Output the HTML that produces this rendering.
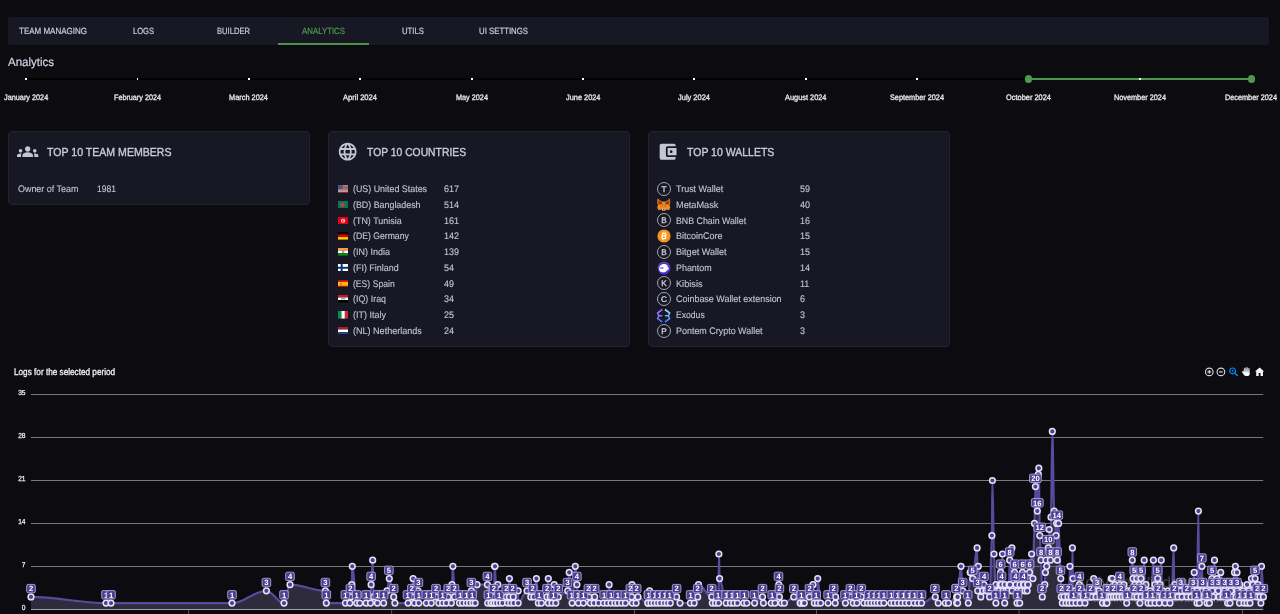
<!DOCTYPE html>
<html><head><meta charset="utf-8"><title>Analytics</title>
<style>
html,body{margin:0;padding:0;background:#0b0b10;}
body{width:1280px;height:614px;overflow:hidden;position:relative;font-family:"Liberation Sans",sans-serif;}
#root{position:absolute;left:0;top:0;width:1280px;height:614px;will-change:transform;text-rendering:geometricPrecision;}
.t{position:absolute;white-space:nowrap;line-height:1;transform-origin:0 0;}
</style></head><body><div id="root">
<div style="position:absolute;left:8px;top:17.3px;width:1260.8px;height:27.7px;background:#181825;border-radius:2px"></div>
<span class="t" style="left:19.00px;top:26.80px;font-size:9.0px;color:#cdcdda;transform:scaleX(0.8888);-webkit-text-stroke:0.2px #cdcdda;">TEAM MANAGING</span>
<span class="t" style="left:133.00px;top:26.80px;font-size:9.0px;color:#cdcdda;transform:scaleX(0.8397);-webkit-text-stroke:0.2px #cdcdda;">LOGS</span>
<span class="t" style="left:217.00px;top:26.80px;font-size:9.0px;color:#cdcdda;transform:scaleX(0.8459);-webkit-text-stroke:0.2px #cdcdda;">BUILDER</span>
<span class="t" style="left:302.00px;top:26.80px;font-size:9.0px;color:#4c9a50;transform:scaleX(0.8714);-webkit-text-stroke:0.2px #4c9a50;">ANALYTICS</span>
<span class="t" style="left:402.00px;top:26.80px;font-size:9.0px;color:#cdcdda;transform:scaleX(0.8625);-webkit-text-stroke:0.2px #cdcdda;">UTILS</span>
<span class="t" style="left:479.00px;top:26.80px;font-size:9.0px;color:#cdcdda;transform:scaleX(0.8672);-webkit-text-stroke:0.2px #cdcdda;">UI SETTINGS</span>
<div style="position:absolute;left:278px;top:43px;width:91px;height:2px;background:#4c9049"></div>
<span class="t" style="left:8.20px;top:56.30px;font-size:12px;color:#d4d4e2;transform:scaleX(0.9580);-webkit-text-stroke:0.2px #d4d4e2;">Analytics</span>
<div style="position:absolute;left:25px;top:78px;width:1227px;height:2px;background:#000"></div>
<div style="position:absolute;left:1028.4px;top:78px;width:222.7px;height:2px;background:#4c9a50"></div>
<div style="position:absolute;left:25.4px;top:78.1px;width:1.8px;height:1.8px;background:#fff"></div>
<span class="t" style="left:4.15px;top:93.85px;font-size:7.9px;color:#e6e6ee;transform:scaleX(0.9253);-webkit-text-stroke:0.32px #e6e6ee;">January 2024</span>
<div style="position:absolute;left:136.7px;top:78.1px;width:1.8px;height:1.8px;background:#fff"></div>
<span class="t" style="left:114.14px;top:93.85px;font-size:7.9px;color:#e6e6ee;transform:scaleX(0.9147);-webkit-text-stroke:0.32px #e6e6ee;">February 2024</span>
<div style="position:absolute;left:248.1px;top:78.1px;width:1.8px;height:1.8px;background:#fff"></div>
<span class="t" style="left:229.48px;top:93.85px;font-size:7.9px;color:#e6e6ee;transform:scaleX(0.9348);-webkit-text-stroke:0.32px #e6e6ee;">March 2024</span>
<div style="position:absolute;left:359.4px;top:78.1px;width:1.8px;height:1.8px;background:#fff"></div>
<span class="t" style="left:343.32px;top:93.85px;font-size:7.9px;color:#e6e6ee;transform:scaleX(0.9557);-webkit-text-stroke:0.32px #e6e6ee;">April 2024</span>
<div style="position:absolute;left:470.8px;top:78.1px;width:1.8px;height:1.8px;background:#fff"></div>
<span class="t" style="left:455.66px;top:93.85px;font-size:7.9px;color:#e6e6ee;transform:scaleX(0.9223);-webkit-text-stroke:0.32px #e6e6ee;">May 2024</span>
<div style="position:absolute;left:582.1px;top:78.1px;width:1.8px;height:1.8px;background:#fff"></div>
<span class="t" style="left:565.75px;top:93.85px;font-size:7.9px;color:#e6e6ee;transform:scaleX(0.9349);-webkit-text-stroke:0.32px #e6e6ee;">June 2024</span>
<div style="position:absolute;left:693.4px;top:78.1px;width:1.8px;height:1.8px;background:#fff"></div>
<span class="t" style="left:678.34px;top:93.85px;font-size:7.9px;color:#e6e6ee;transform:scaleX(0.9462);-webkit-text-stroke:0.32px #e6e6ee;">July 2024</span>
<div style="position:absolute;left:804.8px;top:78.1px;width:1.8px;height:1.8px;background:#fff"></div>
<span class="t" style="left:784.93px;top:93.85px;font-size:7.9px;color:#e6e6ee;transform:scaleX(0.9354);-webkit-text-stroke:0.32px #e6e6ee;">August 2024</span>
<div style="position:absolute;left:916.1px;top:78.1px;width:1.8px;height:1.8px;background:#fff"></div>
<span class="t" style="left:890.02px;top:93.85px;font-size:7.9px;color:#e6e6ee;transform:scaleX(0.9244);-webkit-text-stroke:0.32px #e6e6ee;">September 2024</span>
<div style="position:absolute;left:1027.5px;top:78.1px;width:1.8px;height:1.8px;background:#fff"></div>
<span class="t" style="left:1005.86px;top:93.85px;font-size:7.9px;color:#e6e6ee;transform:scaleX(0.9400);-webkit-text-stroke:0.32px #e6e6ee;">October 2024</span>
<div style="position:absolute;left:1138.8px;top:78.1px;width:1.8px;height:1.8px;background:#fff"></div>
<span class="t" style="left:1113.70px;top:93.85px;font-size:7.9px;color:#e6e6ee;transform:scaleX(0.9251);-webkit-text-stroke:0.32px #e6e6ee;">November 2024</span>
<div style="position:absolute;left:1250.1px;top:78.1px;width:1.8px;height:1.8px;background:#fff"></div>
<span class="t" style="left:1225.04px;top:93.85px;font-size:7.9px;color:#e6e6ee;transform:scaleX(0.9251);-webkit-text-stroke:0.32px #e6e6ee;">December 2024</span>
<div style="position:absolute;left:1024.9px;top:75.1px;width:7.6px;height:7.6px;border-radius:50%;background:#4c9a50"></div>
<div style="position:absolute;left:1247.5px;top:75.1px;width:7.6px;height:7.6px;border-radius:50%;background:#4c9a50"></div>
<div style="position:absolute;left:8px;top:131px;width:300px;height:72px;background:#181825;border:1px solid #232333;border-radius:4px"></div>
<div style="position:absolute;left:327.5px;top:131px;width:300px;height:214px;background:#181825;border:1px solid #232333;border-radius:4px"></div>
<div style="position:absolute;left:647.5px;top:131px;width:300px;height:214px;background:#181825;border:1px solid #232333;border-radius:4px"></div>
<span class="t" style="left:47.40px;top:146.50px;font-size:11.6px;color:#cdcdda;transform:scaleX(0.9117);-webkit-text-stroke:0.35px #cdcdda;">TOP 10 TEAM MEMBERS</span>
<span class="t" style="left:367.10px;top:146.50px;font-size:11.6px;color:#cdcdda;transform:scaleX(0.8921);-webkit-text-stroke:0.35px #cdcdda;">TOP 10 COUNTRIES</span>
<span class="t" style="left:687.10px;top:146.50px;font-size:11.6px;color:#cdcdda;transform:scaleX(0.9057);-webkit-text-stroke:0.35px #cdcdda;">TOP 10 WALLETS</span>
<svg style="position:absolute;left:17.3px;top:140.7px" width="21.33" height="21.33" viewBox="0 0 24 24"><path d="M12 12.75c1.63 0 3.07.39 4.24.9 1.08.48 1.76 1.56 1.76 2.73V18H6v-1.61c0-1.18.68-2.26 1.76-2.73 1.17-.52 2.61-.91 4.24-.91zM4 13c1.1 0 2-.9 2-2s-.9-2-2-2-2 .9-2 2 .9 2 2 2zm1.13 1.1c-.37-.06-.74-.1-1.13-.1-.99 0-1.93.21-2.78.58C.48 14.9 0 15.62 0 16.43V18h4.5v-1.61c0-.83.23-1.61.63-2.29zM20 13c1.1 0 2-.9 2-2s-.9-2-2-2-2 .9-2 2 .9 2 2 2zm4 3.43c0-.81-.48-1.53-1.22-1.85-.85-.37-1.79-.58-2.78-.58-.39 0-.76.04-1.13.1.4.68.63 1.46.63 2.29V18H24v-1.57zM12 6c1.66 0 3 1.34 3 3s-1.34 3-3 3-3-1.34-3-3 1.34-3 3-3z" fill="#c6c6d2"/></svg>
<svg style="position:absolute;left:337.4px;top:140.7px" width="21.33" height="21.33" viewBox="0 0 24 24"><path d="M11.99 2C6.47 2 2 6.48 2 12s4.47 10 9.99 10C17.52 22 22 17.52 22 12S17.52 2 11.99 2zm6.93 6h-2.95c-.32-1.25-.78-2.45-1.38-3.56 1.84.63 3.37 1.91 4.33 3.56zM12 4.04c.83 1.2 1.48 2.53 1.91 3.96h-3.82c.43-1.43 1.08-2.76 1.91-3.96zM4.26 14C4.1 13.36 4 12.69 4 12s.1-1.36.26-2h3.38c-.08.66-.14 1.32-.14 2 0 .68.06 1.34.14 2H4.26zm.82 2h2.95c.32 1.25.78 2.45 1.38 3.56-1.84-.63-3.37-1.9-4.33-3.56zm2.95-8H5.08c.96-1.66 2.49-2.93 4.33-3.56C8.81 5.55 8.35 6.75 8.03 8zM12 19.96c-.83-1.2-1.48-2.53-1.91-3.96h3.82c-.43 1.43-1.08 2.76-1.91 3.96zM14.34 14H9.66c-.09-.66-.16-1.32-.16-2 0-.68.07-1.35.16-2h4.68c.09.65.16 1.32.16 2 0 .68-.07 1.34-.16 2zm.25 5.56c.6-1.11 1.06-2.31 1.38-3.56h2.95c-.96 1.65-2.49 2.93-4.33 3.56zM16.36 14c.08-.66.14-1.32.14-2 0-.68-.06-1.34-.14-2h3.38c.16.64.26 1.31.26 2s-.1 1.36-.26 2h-3.38z" fill="#c6c6d2"/></svg>
<svg style="position:absolute;left:657.3px;top:140.7px" width="21.33" height="21.33" viewBox="0 0 24 24"><path d="M21 18v1c0 1.1-.9 2-2 2H5c-1.11 0-2-.9-2-2V5c0-1.1.89-2 2-2h14c1.1 0 2 .9 2 2v1h-9c-1.11 0-2 .9-2 2v8c0 1.1.89 2 2 2h9zm-9-2h10V8H12v8zm4-2.5c-.83 0-1.5-.67-1.5-1.5s.67-1.5 1.5-1.5 1.5.67 1.5 1.5-.67 1.5-1.5 1.5z" fill="#c6c6d2"/></svg>
<span class="t" style="left:17.60px;top:185.05px;font-size:9.5px;color:#c4c4d2;transform:scaleX(0.9402);-webkit-text-stroke:0.12px #c4c4d2;">Owner of Team</span>
<span class="t" style="left:96.50px;top:185.05px;font-size:9.5px;color:#c4c4d2;transform:scaleX(0.8943);-webkit-text-stroke:0.12px #c4c4d2;">1981</span>
<span class="t" style="left:352.90px;top:185.05px;font-size:9.5px;color:#c4c4d2;transform:scaleX(0.9344);-webkit-text-stroke:0.12px #c4c4d2;">(US) United States</span>
<span class="t" style="left:444.20px;top:185.05px;font-size:9.5px;color:#c4c4d2;transform:scaleX(0.9463);-webkit-text-stroke:0.12px #c4c4d2;">617</span>
<svg style="position:absolute;left:337.8px;top:185.0px" width="10.3" height="7.6" viewBox="0 0 20 15" preserveAspectRatio="none"><rect y="0.000" width="20" height="1.154" fill="#c9444f"/><rect y="1.154" width="20" height="1.154" fill="#f4f1f3"/><rect y="2.308" width="20" height="1.154" fill="#c9444f"/><rect y="3.462" width="20" height="1.154" fill="#f4f1f3"/><rect y="4.615" width="20" height="1.154" fill="#c9444f"/><rect y="5.769" width="20" height="1.154" fill="#f4f1f3"/><rect y="6.923" width="20" height="1.154" fill="#c9444f"/><rect y="8.077" width="20" height="1.154" fill="#f4f1f3"/><rect y="9.231" width="20" height="1.154" fill="#c9444f"/><rect y="10.385" width="20" height="1.154" fill="#f4f1f3"/><rect y="11.538" width="20" height="1.154" fill="#c9444f"/><rect y="12.692" width="20" height="1.154" fill="#f4f1f3"/><rect y="13.846" width="20" height="1.154" fill="#c9444f"/><rect width="9" height="8.1" fill="#4a5788"/></svg>
<span class="t" style="left:352.90px;top:201.05px;font-size:9.5px;color:#c4c4d2;transform:scaleX(0.9330);-webkit-text-stroke:0.12px #c4c4d2;">(BD) Bangladesh</span>
<span class="t" style="left:444.20px;top:201.05px;font-size:9.5px;color:#c4c4d2;transform:scaleX(0.9463);-webkit-text-stroke:0.12px #c4c4d2;">514</span>
<svg style="position:absolute;left:337.8px;top:200.8px" width="10.3" height="7.6" viewBox="0 0 20 15" preserveAspectRatio="none"><rect width="20" height="15" fill="#007a55"/><circle cx="8.8" cy="7.5" r="4.2" fill="#ee2a43"/></svg>
<span class="t" style="left:352.90px;top:217.05px;font-size:9.5px;color:#c4c4d2;transform:scaleX(0.9394);-webkit-text-stroke:0.12px #c4c4d2;">(TN) Tunisia</span>
<span class="t" style="left:444.20px;top:217.05px;font-size:9.5px;color:#c4c4d2;transform:scaleX(0.9463);-webkit-text-stroke:0.12px #c4c4d2;">161</span>
<svg style="position:absolute;left:337.8px;top:216.5px" width="10.3" height="7.6" viewBox="0 0 20 15" preserveAspectRatio="none"><rect width="20" height="15" fill="#e70013"/><circle cx="10" cy="7.5" r="4" fill="#fff"/><circle cx="10.3" cy="7.5" r="2.7" fill="#e70013"/><circle cx="11.3" cy="7.5" r="2.1" fill="#fff"/><circle cx="11.4" cy="7.5" r="1.1" fill="#e70013"/></svg>
<span class="t" style="left:352.90px;top:232.05px;font-size:9.5px;color:#c4c4d2;transform:scaleX(0.9113);-webkit-text-stroke:0.12px #c4c4d2;">(DE) Germany</span>
<span class="t" style="left:444.20px;top:232.05px;font-size:9.5px;color:#c4c4d2;transform:scaleX(0.9463);-webkit-text-stroke:0.12px #c4c4d2;">142</span>
<svg style="position:absolute;left:337.8px;top:232.2px" width="10.3" height="7.6" viewBox="0 0 20 15" preserveAspectRatio="none"><rect width="20" height="5" fill="#000"/><rect y="5" width="20" height="5" fill="#dd0000"/><rect y="10" width="20" height="5" fill="#ffce00"/></svg>
<span class="t" style="left:352.90px;top:248.05px;font-size:9.5px;color:#c4c4d2;transform:scaleX(0.9445);-webkit-text-stroke:0.12px #c4c4d2;">(IN) India</span>
<span class="t" style="left:444.20px;top:248.05px;font-size:9.5px;color:#c4c4d2;transform:scaleX(0.9463);-webkit-text-stroke:0.12px #c4c4d2;">139</span>
<svg style="position:absolute;left:337.8px;top:248.0px" width="10.3" height="7.6" viewBox="0 0 20 15" preserveAspectRatio="none"><rect width="20" height="5" fill="#ff9933"/><rect y="5" width="20" height="5" fill="#fff"/><rect y="10" width="20" height="5" fill="#138808"/><circle cx="10" cy="7.5" r="2" fill="none" stroke="#28308c" stroke-width="0.9"/><circle cx="10" cy="7.5" r="0.8" fill="#28308c"/></svg>
<span class="t" style="left:352.90px;top:264.05px;font-size:9.5px;color:#c4c4d2;transform:scaleX(0.9389);-webkit-text-stroke:0.12px #c4c4d2;">(FI) Finland</span>
<span class="t" style="left:444.20px;top:264.05px;font-size:9.5px;color:#c4c4d2;transform:scaleX(0.9463);-webkit-text-stroke:0.12px #c4c4d2;">54</span>
<svg style="position:absolute;left:337.8px;top:263.8px" width="10.3" height="7.6" viewBox="0 0 20 15" preserveAspectRatio="none"><rect width="20" height="15" fill="#fff"/><rect x="5.2" width="3.8" height="15" fill="#003580"/><rect y="5.6" width="20" height="3.8" fill="#003580"/></svg>
<span class="t" style="left:352.90px;top:280.05px;font-size:9.5px;color:#c4c4d2;transform:scaleX(0.9077);-webkit-text-stroke:0.12px #c4c4d2;">(ES) Spain</span>
<span class="t" style="left:444.20px;top:280.05px;font-size:9.5px;color:#c4c4d2;transform:scaleX(0.9463);-webkit-text-stroke:0.12px #c4c4d2;">49</span>
<svg style="position:absolute;left:337.8px;top:279.5px" width="10.3" height="7.6" viewBox="0 0 20 15" preserveAspectRatio="none"><rect width="20" height="15" fill="#c60b1e"/><rect y="3.75" width="20" height="7.5" fill="#ffc400"/><rect x="4.3" y="5.3" width="3" height="4" rx="0.8" fill="#b5652a"/></svg>
<span class="t" style="left:352.90px;top:295.05px;font-size:9.5px;color:#c4c4d2;transform:scaleX(0.9331);-webkit-text-stroke:0.12px #c4c4d2;">(IQ) Iraq</span>
<span class="t" style="left:444.20px;top:295.05px;font-size:9.5px;color:#c4c4d2;transform:scaleX(0.9463);-webkit-text-stroke:0.12px #c4c4d2;">34</span>
<svg style="position:absolute;left:337.8px;top:295.2px" width="10.3" height="7.6" viewBox="0 0 20 15" preserveAspectRatio="none"><rect width="20" height="5" fill="#ce1126"/><rect y="5" width="20" height="5" fill="#fff"/><rect y="10" width="20" height="5" fill="#000"/><rect x="6" y="6.6" width="8" height="1.8" fill="#2a8a4a"/></svg>
<span class="t" style="left:352.90px;top:311.05px;font-size:9.5px;color:#c4c4d2;transform:scaleX(0.9474);-webkit-text-stroke:0.12px #c4c4d2;">(IT) Italy</span>
<span class="t" style="left:444.20px;top:311.05px;font-size:9.5px;color:#c4c4d2;transform:scaleX(0.9463);-webkit-text-stroke:0.12px #c4c4d2;">25</span>
<svg style="position:absolute;left:337.8px;top:311.0px" width="10.3" height="7.6" viewBox="0 0 20 15" preserveAspectRatio="none"><rect width="6.67" height="15" fill="#009246"/><rect x="6.67" width="6.67" height="15" fill="#fff"/><rect x="13.33" width="6.67" height="15" fill="#ce2b37"/></svg>
<span class="t" style="left:352.90px;top:327.05px;font-size:9.5px;color:#c4c4d2;transform:scaleX(0.9511);-webkit-text-stroke:0.12px #c4c4d2;">(NL) Netherlands</span>
<span class="t" style="left:444.20px;top:327.05px;font-size:9.5px;color:#c4c4d2;transform:scaleX(0.9463);-webkit-text-stroke:0.12px #c4c4d2;">24</span>
<svg style="position:absolute;left:337.8px;top:326.8px" width="10.3" height="7.6" viewBox="0 0 20 15" preserveAspectRatio="none"><rect width="20" height="5" fill="#ae1c28"/><rect y="5" width="20" height="5" fill="#fff"/><rect y="10" width="20" height="5" fill="#21468b"/></svg>
<span class="t" style="left:675.80px;top:185.05px;font-size:9.5px;color:#c4c4d2;transform:scaleX(0.9446);-webkit-text-stroke:0.12px #c4c4d2;">Trust Wallet</span>
<span class="t" style="left:799.70px;top:185.05px;font-size:9.5px;color:#c4c4d2;transform:scaleX(0.9463);-webkit-text-stroke:0.12px #c4c4d2;">59</span>
<svg style="position:absolute;left:656px;top:180.8px" width="16" height="16" viewBox="-8 -8 16 16"><circle r="6.5" fill="none" stroke="#b4b4c2" stroke-width="0.9"/><text x="0" y="2.95" text-anchor="middle" font-family="Liberation Sans, sans-serif" font-size="8.2" fill="#d0d0dc" stroke="#d0d0dc" stroke-width="0.3">T</text></svg>
<span class="t" style="left:675.80px;top:201.05px;font-size:9.5px;color:#c4c4d2;transform:scaleX(0.9676);-webkit-text-stroke:0.12px #c4c4d2;">MetaMask</span>
<span class="t" style="left:799.70px;top:201.05px;font-size:9.5px;color:#c4c4d2;transform:scaleX(0.9463);-webkit-text-stroke:0.12px #c4c4d2;">40</span>
<svg style="position:absolute;left:657.25px;top:198.2px" width="13.5" height="12.6" viewBox="0 0 27 25.2"><polygon points="1,1 10,7.5 17,7.5 26,1 26.6,10 25,14 26.6,19 24,24.5 17.5,23 16,25.2 11,25.2 9.5,23 3,24.5 0.4,19 2,14 0.4,10" fill="#f6871c"/><polygon points="1.2,1.5 10.2,8 12,13.2 2.6,13.2 0.8,9.5" fill="#c4641a"/><polygon points="25.8,1.5 16.8,8 15,13.2 24.4,13.2 26.2,9.5" fill="#c4641a"/><polygon points="3.2,5 10,9.6 10.8,12.6 3.6,12.6" fill="#7d4216"/><polygon points="23.8,5 17,9.6 16.2,12.6 23.4,12.6" fill="#7d4216"/><polygon points="10,7.5 17,7.5 15.2,13 11.8,13" fill="#f5891f"/><circle cx="10.3" cy="16.8" r="1.35" fill="#a8602c"/><circle cx="16.7" cy="16.8" r="1.35" fill="#a8602c"/><polygon points="10.3,21.6 16.7,21.6 17.3,25.2 9.7,25.2" fill="#d8d2cb"/><polygon points="12,22.6 15,22.6 14.8,24.6 12.2,24.6" fill="#27323f"/></svg>
<span class="t" style="left:675.80px;top:217.05px;font-size:9.5px;color:#c4c4d2;transform:scaleX(0.9263);-webkit-text-stroke:0.12px #c4c4d2;">BNB Chain Wallet</span>
<span class="t" style="left:799.70px;top:217.05px;font-size:9.5px;color:#c4c4d2;transform:scaleX(0.9463);-webkit-text-stroke:0.12px #c4c4d2;">16</span>
<svg style="position:absolute;left:656px;top:212.3px" width="16" height="16" viewBox="-8 -8 16 16"><circle r="6.5" fill="none" stroke="#b4b4c2" stroke-width="0.9"/><text x="0" y="2.95" text-anchor="middle" font-family="Liberation Sans, sans-serif" font-size="8.2" fill="#d0d0dc" stroke="#d0d0dc" stroke-width="0.3">B</text></svg>
<span class="t" style="left:675.80px;top:232.05px;font-size:9.5px;color:#c4c4d2;transform:scaleX(0.9490);-webkit-text-stroke:0.12px #c4c4d2;">BitcoinCore</span>
<span class="t" style="left:799.70px;top:232.05px;font-size:9.5px;color:#c4c4d2;transform:scaleX(0.9463);-webkit-text-stroke:0.12px #c4c4d2;">15</span>
<svg style="position:absolute;left:657px;top:229.0px" width="14" height="14" viewBox="-7 -7 14 14"><circle r="6.6" fill="#f7931a"/><g transform="rotate(12)"><text x="0.1" y="3" text-anchor="middle" font-family="Liberation Sans, sans-serif" font-weight="bold" font-size="8.4" fill="#fff">B</text><rect x="-1.3" y="-4.4" width="0.8" height="1.6" fill="#fff"/><rect x="0.3" y="-4.4" width="0.8" height="1.6" fill="#fff"/><rect x="-1.3" y="2.8" width="0.8" height="1.6" fill="#fff"/><rect x="0.3" y="2.8" width="0.8" height="1.6" fill="#fff"/></g></svg>
<span class="t" style="left:675.80px;top:248.05px;font-size:9.5px;color:#c4c4d2;transform:scaleX(0.9552);-webkit-text-stroke:0.12px #c4c4d2;">Bitget Wallet</span>
<span class="t" style="left:799.70px;top:248.05px;font-size:9.5px;color:#c4c4d2;transform:scaleX(0.9463);-webkit-text-stroke:0.12px #c4c4d2;">15</span>
<svg style="position:absolute;left:656px;top:243.8px" width="16" height="16" viewBox="-8 -8 16 16"><circle r="6.5" fill="none" stroke="#b4b4c2" stroke-width="0.9"/><text x="0" y="2.95" text-anchor="middle" font-family="Liberation Sans, sans-serif" font-size="8.2" fill="#d0d0dc" stroke="#d0d0dc" stroke-width="0.3">B</text></svg>
<span class="t" style="left:675.80px;top:264.05px;font-size:9.5px;color:#c4c4d2;transform:scaleX(0.9362);-webkit-text-stroke:0.12px #c4c4d2;">Phantom</span>
<span class="t" style="left:799.70px;top:264.05px;font-size:9.5px;color:#c4c4d2;transform:scaleX(0.9463);-webkit-text-stroke:0.12px #c4c4d2;">14</span>
<svg style="position:absolute;left:657px;top:260.6px" width="14" height="14" viewBox="-7 -7 14 14"><defs><linearGradient id="phg" x1="0" y1="0" x2="0" y2="1"><stop offset="0" stop-color="#4f48b4"/><stop offset="1" stop-color="#5a22f8"/></linearGradient></defs><circle r="6.4" fill="url(#phg)"/><path d="M-4.9 0.9 C-4.9 -2.2 -2.6 -3.9 0.2 -3.9 C2.6 -3.9 3.9 -2.2 4 -0.4 C4.4 0.2 4.9 0.3 5.1 0.6 C5.1 1.4 4.3 1.6 3.7 1.5 C3.1 3.4 1.2 4.3 -0.9 4.3 C-3.4 4.3 -4.9 3 -4.9 0.9 Z" fill="#fbfaff"/><rect x="-3.9" y="-0.75" width="3.6" height="1.5" rx="0.75" fill="#7a68e0"/></svg>
<span class="t" style="left:675.80px;top:280.05px;font-size:9.5px;color:#c4c4d2;transform:scaleX(0.9653);-webkit-text-stroke:0.12px #c4c4d2;">Kibisis</span>
<span class="t" style="left:799.70px;top:280.05px;font-size:9.5px;color:#c4c4d2;transform:scaleX(0.9463);-webkit-text-stroke:0.12px #c4c4d2;">11</span>
<svg style="position:absolute;left:656px;top:275.3px" width="16" height="16" viewBox="-8 -8 16 16"><circle r="6.5" fill="none" stroke="#b4b4c2" stroke-width="0.9"/><text x="0" y="2.95" text-anchor="middle" font-family="Liberation Sans, sans-serif" font-size="8.2" fill="#d0d0dc" stroke="#d0d0dc" stroke-width="0.3">K</text></svg>
<span class="t" style="left:675.80px;top:295.05px;font-size:9.5px;color:#c4c4d2;transform:scaleX(0.9418);-webkit-text-stroke:0.12px #c4c4d2;">Coinbase Wallet extension</span>
<span class="t" style="left:799.70px;top:295.05px;font-size:9.5px;color:#c4c4d2;transform:scaleX(0.9463);-webkit-text-stroke:0.12px #c4c4d2;">6</span>
<svg style="position:absolute;left:656px;top:291.1px" width="16" height="16" viewBox="-8 -8 16 16"><circle r="6.5" fill="none" stroke="#b4b4c2" stroke-width="0.9"/><text x="0" y="2.95" text-anchor="middle" font-family="Liberation Sans, sans-serif" font-size="8.2" fill="#d0d0dc" stroke="#d0d0dc" stroke-width="0.3">C</text></svg>
<span class="t" style="left:675.80px;top:311.05px;font-size:9.5px;color:#c4c4d2;transform:scaleX(0.9057);-webkit-text-stroke:0.12px #c4c4d2;">Exodus</span>
<span class="t" style="left:799.70px;top:311.05px;font-size:9.5px;color:#c4c4d2;transform:scaleX(0.9463);-webkit-text-stroke:0.12px #c4c4d2;">3</span>
<svg style="position:absolute;left:656.2px;top:307.6px" width="15" height="15" viewBox="-7.5 -7.5 15 15"><defs><linearGradient id="exl" x1="0" y1="0" x2="0" y2="1"><stop offset="0" stop-color="#9d5cf9"/><stop offset="0.5" stop-color="#8f7cfa"/><stop offset="1" stop-color="#3a6cf2"/></linearGradient><linearGradient id="exr" x1="0" y1="0" x2="0" y2="1"><stop offset="0" stop-color="#b4d8fb"/><stop offset="0.45" stop-color="#6db4fa"/><stop offset="1" stop-color="#2b76f5"/></linearGradient></defs><g fill="none" stroke-width="1.55" stroke-linejoin="round" stroke-linecap="butt"><path d="M-1.2 -6 L-6 -2.5 L-4.6 0.3 L-6 3 L-1.2 6.5 M-4.6 0.3 H-1.2" stroke="url(#exl)"/><path d="M1.4 -6 L6.2 -2.5 L4.8 0.3 L6.2 3 L1.4 6.5 M4.8 0.3 H1.4" stroke="url(#exr)"/></g></svg>
<span class="t" style="left:675.80px;top:327.05px;font-size:9.5px;color:#c4c4d2;transform:scaleX(0.9409);-webkit-text-stroke:0.12px #c4c4d2;">Pontem Crypto Wallet</span>
<span class="t" style="left:799.70px;top:327.05px;font-size:9.5px;color:#c4c4d2;transform:scaleX(0.9463);-webkit-text-stroke:0.12px #c4c4d2;">3</span>
<svg style="position:absolute;left:656px;top:322.6px" width="16" height="16" viewBox="-8 -8 16 16"><circle r="6.5" fill="none" stroke="#b4b4c2" stroke-width="0.9"/><text x="0" y="2.95" text-anchor="middle" font-family="Liberation Sans, sans-serif" font-size="8.2" fill="#d0d0dc" stroke="#d0d0dc" stroke-width="0.3">P</text></svg>
<span class="t" style="left:13.80px;top:368.00px;font-size:9.6px;color:#f0f0f5;transform:scaleX(0.8542);-webkit-text-stroke:0.3px #f0f0f5;">Logs for the selected period</span>
<svg style="position:absolute;left:0;top:0" width="1280" height="614" viewBox="0 0 1280 614">
<rect x="31" y="566" width="1232.2" height="1" fill="#78787a"/>
<rect x="31" y="523" width="1232.2" height="1" fill="#78787a"/>
<rect x="31" y="480" width="1232.2" height="1" fill="#78787a"/>
<rect x="31" y="437" width="1232.2" height="1" fill="#78787a"/>
<rect x="31" y="394" width="1232.2" height="1" fill="#78787a"/>
<rect x="31" y="609" width="1232.2" height="1" fill="#aaaaac"/>
<rect x="188.3" y="610" width="0.8" height="4" fill="#66666b"/>
<rect x="391.3" y="610" width="0.8" height="4" fill="#66666b"/>
<rect x="634.1" y="610" width="0.8" height="4" fill="#66666b"/>
<rect x="816.1" y="610" width="0.8" height="4" fill="#66666b"/>
<rect x="1018.6" y="610" width="0.8" height="4" fill="#66666b"/>
<rect x="1242.0" y="610" width="0.8" height="4" fill="#66666b"/>
<path d="M31.0 596.9C58.8 596.9 78.2 603.1 106.0 603.1C107.9 603.1 109.1 603.1 111.0 603.1C155.8 603.1 187.2 603.1 232.0 603.1C244.7 603.1 253.7 590.8 266.4 590.8C272.9 590.8 277.5 603.1 284.0 603.1C286.2 603.1 287.8 584.7 290.0 584.7C303.1 584.7 312.3 590.8 325.4 590.8C325.7 590.8 326.0 603.1 326.3 603.1C333.4 603.1 338.3 603.1 345.4 603.1C347.0 603.1 348.2 603.1 349.8 603.1C350.0 603.1 350.2 596.9 350.4 596.9C350.9 596.9 351.2 584.7 351.7 584.7C351.9 584.7 352.1 566.3 352.3 566.3C353.9 566.3 355.1 603.1 356.7 603.1C357.8 603.1 358.7 603.1 359.8 603.1C362.1 603.1 363.8 603.1 366.1 603.1C367.7 603.1 368.9 603.1 370.5 603.1C370.7 603.1 370.9 584.7 371.1 584.7C371.7 584.7 372.1 560.2 372.7 560.2C373.0 560.2 373.2 596.9 373.5 596.9C374.9 596.9 376.0 603.1 377.4 603.1C379.7 603.1 381.3 603.1 383.6 603.1C384.9 603.1 385.7 590.8 387.0 590.8C387.9 590.8 388.4 578.6 389.3 578.6C390.9 578.6 392.1 596.9 393.7 596.9C394.1 596.9 394.5 603.1 394.9 603.1C399.8 603.1 403.2 603.1 408.1 603.1C409.5 603.1 410.5 596.9 411.9 596.9C412.3 596.9 412.7 578.6 413.1 578.6C413.6 578.6 413.9 603.1 414.4 603.1C415.7 603.1 416.7 590.8 418.0 590.8C418.3 590.8 418.5 603.1 418.8 603.1C421.6 603.1 423.5 603.1 426.3 603.1C428.2 603.1 429.4 603.1 431.3 603.1C433.0 603.1 434.3 596.9 436.0 596.9C437.0 596.9 437.8 603.1 438.8 603.1C440.2 603.1 441.2 603.1 442.6 603.1C444.0 603.1 444.9 603.1 446.3 603.1C447.0 603.1 447.5 596.9 448.2 596.9C449.4 596.9 450.2 603.1 451.4 603.1C451.6 603.1 451.8 584.7 452.0 584.7C452.3 584.7 452.6 566.3 452.9 566.3C453.5 566.3 453.9 596.9 454.5 596.9C456.4 596.9 457.6 603.1 459.5 603.1C460.6 603.1 461.5 603.1 462.6 603.1C464.0 603.1 465.0 603.1 466.4 603.1C467.5 603.1 468.4 603.1 469.5 603.1C470.2 603.1 470.7 590.8 471.4 590.8C471.9 590.8 472.2 603.1 472.7 603.1C473.6 603.1 474.3 603.1 475.2 603.1C475.9 603.1 476.3 584.7 477.0 584.7C480.9 584.7 483.5 584.7 487.4 584.7C487.5 584.7 487.6 603.1 487.7 603.1C488.9 603.1 489.7 603.1 490.9 603.1C491.0 603.1 491.2 603.1 491.3 603.1C491.8 603.1 492.2 596.9 492.7 596.9C493.1 596.9 493.4 596.9 493.8 596.9C493.8 596.9 493.8 603.1 493.8 603.1C493.9 603.1 493.9 603.1 494.0 603.1C494.2 603.1 494.4 566.3 494.6 566.3C494.7 566.3 494.9 566.3 495.0 566.3C495.5 566.3 495.8 603.1 496.3 603.1C496.9 603.1 497.2 584.7 497.8 584.7C498.4 584.7 498.8 603.1 499.4 603.1C500.5 603.1 501.4 603.1 502.5 603.1C503.9 603.1 504.9 596.9 506.3 596.9C506.8 596.9 507.1 603.1 507.6 603.1C508.3 603.1 508.7 578.6 509.4 578.6C509.4 578.6 509.4 596.9 509.4 596.9C509.9 596.9 510.2 603.1 510.7 603.1C511.6 603.1 512.3 596.9 513.2 596.9C513.4 596.9 513.6 603.1 513.8 603.1C515.4 603.1 516.6 590.8 518.2 590.8C518.2 590.8 518.2 603.1 518.2 603.1C521.5 603.1 523.7 590.8 527.0 590.8C528.4 590.8 529.4 596.9 530.8 596.9C531.9 596.9 532.8 596.9 533.9 596.9C534.8 596.9 535.5 578.6 536.4 578.6C537.1 578.6 537.6 603.1 538.3 603.1C539.4 603.1 540.3 603.1 541.4 603.1C543.5 603.1 544.9 596.9 547.0 596.9C547.5 596.9 547.8 578.6 548.3 578.6C548.3 578.6 548.3 603.1 548.3 603.1C549.0 603.1 549.5 596.9 550.2 596.9C550.9 596.9 551.3 603.1 552.0 603.1C552.8 603.1 553.4 584.7 554.2 584.7C554.8 584.7 555.2 603.1 555.8 603.1C556.7 603.1 557.4 596.9 558.3 596.9C561.8 596.9 564.2 590.8 567.7 590.8C568.3 590.8 568.6 572.4 569.2 572.4C570.3 572.4 571.0 603.1 572.1 603.1C573.3 603.1 574.1 566.3 575.3 566.3C575.9 566.3 576.3 584.7 576.9 584.7C577.5 584.7 577.8 603.1 578.4 603.1C580.3 603.1 581.5 603.1 583.4 603.1C585.5 603.1 586.9 596.9 589.0 596.9C589.5 596.9 589.8 603.1 590.3 603.1C591.7 603.1 592.7 603.1 594.1 603.1C594.3 603.1 594.5 596.9 594.7 596.9C596.1 596.9 597.1 603.1 598.5 603.1C600.4 603.1 601.6 603.1 603.5 603.1C604.9 603.1 605.8 603.1 607.2 603.1C607.9 603.1 608.4 584.7 609.1 584.7C609.8 584.7 610.3 603.1 611.0 603.1C612.4 603.1 613.4 603.1 614.8 603.1C615.9 603.1 616.8 603.1 617.9 603.1C619.3 603.1 620.3 603.1 621.7 603.1C623.1 603.1 624.0 603.1 625.4 603.1C627.7 603.1 629.4 596.9 631.7 596.9C631.8 596.9 631.9 584.7 632.0 584.7C632.1 584.7 632.2 603.1 632.3 603.1C633.7 603.1 634.7 603.1 636.1 603.1C636.8 603.1 637.3 596.9 638.0 596.9C641.6 596.9 644.2 603.1 647.8 603.1C647.9 603.1 647.9 603.1 648.0 603.1C648.6 603.1 649.0 590.8 649.6 590.8C650.1 590.8 650.4 603.1 650.9 603.1C652.0 603.1 652.9 603.1 654.0 603.1C655.2 603.1 656.0 603.1 657.2 603.1C658.3 603.1 659.2 603.1 660.3 603.1C661.7 603.1 662.7 603.1 664.1 603.1C665.2 603.1 666.1 603.1 667.2 603.1C668.3 603.1 669.2 603.1 670.3 603.1C672.6 603.1 674.3 596.9 676.6 596.9C677.9 596.9 678.7 603.1 680.0 603.1C683.9 603.1 686.5 603.1 690.4 603.1C691.8 603.1 692.8 603.1 694.2 603.1C695.5 603.1 696.4 596.9 697.7 596.9C698.0 596.9 698.2 584.7 698.5 584.7C703.4 584.7 706.8 596.9 711.7 596.9C711.9 596.9 712.1 603.1 712.3 603.1C713.5 603.1 714.3 603.1 715.5 603.1C716.6 603.1 717.5 603.1 718.6 603.1C718.7 603.1 718.8 554.0 718.9 554.0C719.2 554.0 719.3 578.6 719.6 578.6C722.0 578.6 723.7 603.1 726.1 603.1C727.7 603.1 728.9 603.1 730.5 603.1C731.7 603.1 732.5 603.1 733.7 603.1C735.1 603.1 736.0 603.1 737.4 603.1C739.7 603.1 741.4 603.1 743.7 603.1C744.8 603.1 745.7 603.1 746.8 603.1C749.7 603.1 751.7 603.1 754.6 603.1C757.5 603.1 759.6 596.9 762.5 596.9C762.8 596.9 763.1 603.1 763.4 603.1C766.3 603.1 768.4 603.1 771.3 603.1C772.7 603.1 773.6 603.1 775.0 603.1C776.4 603.1 777.4 584.7 778.8 584.7C779.0 584.7 779.2 596.9 779.4 596.9C780.1 596.9 780.6 603.1 781.3 603.1C782.4 603.1 783.3 603.1 784.4 603.1C787.9 603.1 790.3 596.9 793.8 596.9C796.1 596.9 797.8 603.1 800.1 603.1C800.2 603.1 800.4 603.1 800.5 603.1C801.5 603.1 802.2 603.1 803.2 603.1C803.6 603.1 803.9 603.1 804.3 603.1C806.2 603.1 807.6 596.9 809.5 596.9C810.8 596.9 811.7 584.7 813.0 584.7C813.5 584.7 813.8 603.1 814.3 603.1C815.4 603.1 816.3 603.1 817.4 603.1C817.5 603.1 817.6 578.6 817.7 578.6C818.8 578.6 819.5 603.1 820.6 603.1C823.4 603.1 825.3 603.1 828.1 603.1C830.7 603.1 832.6 603.1 835.2 603.1C835.3 603.1 835.5 596.9 835.6 596.9C839.2 596.9 841.8 603.1 845.4 603.1C847.4 603.1 848.7 596.9 850.7 596.9C851.6 596.9 852.3 603.1 853.2 603.1C854.6 603.1 855.5 603.1 856.9 603.1C858.5 603.1 859.7 596.9 861.3 596.9C862.2 596.9 862.9 603.1 863.8 603.1C865.2 603.1 866.2 603.1 867.6 603.1C868.7 603.1 869.6 603.1 870.7 603.1C871.9 603.1 872.7 603.1 873.9 603.1C875.0 603.1 875.9 603.1 877.0 603.1C878.1 603.1 879.0 603.1 880.1 603.1C881.5 603.1 882.5 603.1 883.9 603.1C886.5 603.1 888.2 603.1 890.8 603.1C891.9 603.1 892.8 603.1 893.9 603.1C895.3 603.1 896.3 603.1 897.7 603.1C899.1 603.1 900.0 603.1 901.4 603.1C902.8 603.1 903.8 603.1 905.2 603.1C906.6 603.1 907.6 603.1 909.0 603.1C910.9 603.1 912.1 603.1 914.0 603.1C915.4 603.1 916.3 603.1 917.7 603.1C919.1 603.1 920.1 603.1 921.5 603.1C926.6 603.1 930.2 596.9 935.3 596.9C936.4 596.9 937.1 603.1 938.2 603.1C940.8 603.1 942.7 603.1 945.3 603.1C946.5 603.1 947.3 603.1 948.5 603.1C951.5 603.1 953.6 596.9 956.6 596.9C956.6 596.9 956.6 603.1 956.6 603.1C957.0 603.1 957.2 603.1 957.6 603.1C957.6 603.1 957.6 596.9 957.6 596.9C958.9 596.9 959.7 566.3 961.0 566.3C961.6 566.3 962.1 590.8 962.7 590.8C964.8 590.8 966.2 603.1 968.3 603.1C969.0 603.1 969.5 572.4 970.2 572.4C971.1 572.4 971.8 578.6 972.7 578.6C974.3 578.6 975.5 547.9 977.1 547.9C977.3 547.9 977.5 590.8 977.7 590.8C977.9 590.8 978.1 566.3 978.3 566.3C979.2 566.3 979.9 596.9 980.8 596.9C981.5 596.9 982.0 590.8 982.7 590.8C983.2 590.8 983.5 584.7 984.0 584.7C984.7 584.7 985.3 590.8 986.0 590.8C986.7 590.8 987.3 590.8 988.0 590.8C988.6 590.8 989.0 596.9 989.6 596.9C989.7 596.9 989.9 590.8 990.0 590.8C990.7 590.8 991.2 535.6 991.9 535.6C992.1 535.6 992.2 480.5 992.4 480.5C993.0 480.5 993.4 554.0 994.0 554.0C994.7 554.0 995.2 603.1 995.9 603.1C995.9 603.1 996.0 584.7 996.0 584.7C996.4 584.7 996.6 590.8 997.0 590.8C997.7 590.8 998.3 590.8 999.0 590.8C999.4 590.8 999.6 584.7 1000.0 584.7C1000.3 584.7 1000.4 572.4 1000.7 572.4C1001.0 572.4 1001.2 584.7 1001.5 584.7C1001.9 584.7 1002.1 554.0 1002.5 554.0C1002.7 554.0 1002.8 590.8 1003.0 590.8C1003.6 590.8 1004.1 603.1 1004.7 603.1C1004.8 603.1 1004.9 584.7 1005.0 584.7C1005.4 584.7 1005.6 590.8 1006.0 590.8C1006.7 590.8 1007.3 590.8 1008.0 590.8C1008.4 590.8 1008.6 584.7 1009.0 584.7C1009.3 584.7 1009.4 560.2 1009.7 560.2C1009.8 560.2 1009.9 584.7 1010.0 584.7C1010.7 584.7 1011.2 547.9 1011.9 547.9C1011.9 547.9 1012.0 590.8 1012.0 590.8C1013.0 590.8 1013.7 572.4 1014.7 572.4C1015.2 572.4 1015.5 584.7 1016.0 584.7C1016.4 584.7 1016.6 603.1 1017.0 603.1C1017.4 603.1 1017.6 590.8 1018.0 590.8C1018.6 590.8 1019.1 603.1 1019.7 603.1C1019.8 603.1 1019.9 584.7 1020.0 584.7C1020.4 584.7 1020.6 590.8 1021.0 590.8C1021.6 590.8 1021.9 572.4 1022.5 572.4C1022.9 572.4 1023.1 584.7 1023.5 584.7C1023.7 584.7 1023.8 584.7 1024.0 584.7C1024.4 584.7 1024.6 590.8 1025.0 590.8C1025.8 590.8 1026.4 590.8 1027.2 590.8C1027.5 590.8 1027.6 584.7 1027.9 584.7C1027.9 584.7 1028.0 584.7 1028.0 584.7C1028.6 584.7 1028.9 572.4 1029.5 572.4C1030.3 572.4 1030.8 554.0 1031.6 554.0C1032.1 554.0 1032.4 578.6 1032.9 578.6C1033.5 578.6 1033.9 523.4 1034.5 523.4C1034.8 523.4 1035.1 486.6 1035.4 486.6C1036.1 486.6 1036.6 511.1 1037.3 511.1C1037.7 511.1 1037.9 474.3 1038.3 474.3C1038.5 474.3 1038.6 468.2 1038.8 468.2C1039.2 468.2 1039.4 535.6 1039.8 535.6C1040.2 535.6 1040.6 560.2 1041.0 560.2C1041.5 560.2 1041.8 596.9 1042.3 596.9C1043.2 596.9 1043.9 584.7 1044.8 584.7C1045.0 584.7 1045.2 572.4 1045.4 572.4C1045.6 572.4 1045.8 560.2 1046.0 560.2C1046.3 560.2 1046.4 566.3 1046.7 566.3C1047.3 566.3 1047.7 547.9 1048.3 547.9C1048.6 547.9 1048.9 529.5 1049.2 529.5C1049.6 529.5 1050.0 560.2 1050.4 560.2C1050.6 560.2 1050.8 517.2 1051.0 517.2C1051.5 517.2 1051.8 431.4 1052.3 431.4C1053.0 431.4 1053.5 511.1 1054.2 511.1C1054.9 511.1 1055.3 535.6 1056.0 535.6C1056.3 535.6 1056.4 523.4 1056.7 523.4C1056.9 523.4 1057.1 560.2 1057.3 560.2C1057.8 560.2 1058.1 523.4 1058.6 523.4C1059.4 523.4 1060.0 578.6 1060.8 578.6C1061.0 578.6 1061.1 596.9 1061.3 596.9C1061.7 596.9 1061.9 603.1 1062.3 603.1C1062.9 603.1 1063.4 596.9 1064.0 596.9C1064.7 596.9 1065.3 603.1 1066.0 603.1C1066.4 603.1 1066.6 590.8 1067.0 590.8C1067.4 590.8 1067.6 596.9 1068.0 596.9C1068.4 596.9 1068.6 603.1 1069.0 603.1C1069.3 603.1 1069.6 566.3 1069.9 566.3C1070.3 566.3 1070.6 596.9 1071.0 596.9C1071.4 596.9 1071.6 603.1 1072.0 603.1C1072.1 603.1 1072.3 547.9 1072.4 547.9C1072.6 547.9 1072.8 578.6 1073.0 578.6C1073.4 578.6 1073.6 596.9 1074.0 596.9C1074.4 596.9 1074.6 590.8 1075.0 590.8C1075.4 590.8 1075.6 603.1 1076.0 603.1C1076.7 603.1 1077.3 596.9 1078.0 596.9C1078.5 596.9 1078.8 584.7 1079.3 584.7C1079.4 584.7 1079.5 596.9 1079.6 596.9C1079.7 596.9 1079.9 603.1 1080.0 603.1C1080.7 603.1 1081.3 590.8 1082.0 590.8C1082.4 590.8 1082.6 596.9 1083.0 596.9C1083.7 596.9 1084.3 603.1 1085.0 603.1C1086.1 603.1 1086.9 596.9 1088.0 596.9C1088.7 596.9 1089.3 590.8 1090.0 590.8C1090.2 590.8 1090.4 596.9 1090.6 596.9C1091.1 596.9 1091.5 596.9 1092.0 596.9C1092.6 596.9 1093.1 578.6 1093.7 578.6C1094.2 578.6 1094.5 590.8 1095.0 590.8C1095.4 590.8 1095.6 596.9 1096.0 596.9C1096.4 596.9 1096.8 590.8 1097.2 590.8C1097.9 590.8 1098.3 590.8 1099.0 590.8C1099.4 590.8 1099.6 596.9 1100.0 596.9C1100.9 596.9 1101.6 603.1 1102.5 603.1C1103.1 603.1 1103.4 596.9 1104.0 596.9C1104.7 596.9 1105.3 603.1 1106.0 603.1C1106.4 603.1 1106.6 603.1 1107.0 603.1C1107.2 603.1 1107.3 596.9 1107.5 596.9C1107.9 596.9 1108.1 596.9 1108.5 596.9C1108.7 596.9 1108.8 596.9 1109.0 596.9C1109.4 596.9 1109.6 590.8 1110.0 590.8C1110.4 590.8 1110.6 596.9 1111.0 596.9C1111.1 596.9 1111.1 578.6 1111.2 578.6C1111.6 578.6 1111.9 578.6 1112.3 578.6C1112.7 578.6 1113.1 596.9 1113.5 596.9C1113.7 596.9 1113.8 590.8 1114.0 590.8C1114.4 590.8 1114.6 584.7 1115.0 584.7C1115.4 584.7 1115.6 596.9 1116.0 596.9C1116.7 596.9 1117.3 590.8 1118.0 590.8C1118.4 590.8 1118.6 596.9 1119.0 596.9C1119.3 596.9 1119.5 584.7 1119.8 584.7C1120.6 584.7 1121.2 596.9 1122.0 596.9C1122.4 596.9 1122.6 590.8 1123.0 590.8C1123.4 590.8 1123.6 584.7 1124.0 584.7C1124.4 584.7 1124.6 596.9 1125.0 596.9C1125.6 596.9 1126.1 603.1 1126.7 603.1C1127.2 603.1 1127.5 590.8 1128.0 590.8C1128.7 590.8 1129.3 596.9 1130.0 596.9C1130.4 596.9 1130.6 590.8 1131.0 590.8C1131.5 590.8 1131.8 560.2 1132.3 560.2C1132.6 560.2 1132.7 578.6 1133.0 578.6C1133.4 578.6 1133.8 596.9 1134.2 596.9C1134.5 596.9 1134.7 584.7 1135.0 584.7C1135.6 584.7 1136.1 578.6 1136.7 578.6C1136.8 578.6 1136.9 596.9 1137.0 596.9C1137.4 596.9 1137.6 590.8 1138.0 590.8C1138.4 590.8 1138.6 584.7 1139.0 584.7C1139.3 584.7 1139.6 603.1 1139.9 603.1C1140.3 603.1 1140.6 578.6 1141.0 578.6C1141.0 578.6 1141.1 596.9 1141.1 596.9C1141.8 596.9 1142.3 590.8 1143.0 590.8C1143.4 590.8 1143.8 560.2 1144.2 560.2C1144.5 560.2 1144.7 596.9 1145.0 596.9C1145.4 596.9 1145.6 584.7 1146.0 584.7C1146.7 584.7 1147.3 603.1 1148.0 603.1C1148.4 603.1 1148.6 596.9 1149.0 596.9C1149.4 596.9 1149.6 590.8 1150.0 590.8C1150.4 590.8 1150.6 603.1 1151.0 603.1C1151.9 603.1 1152.5 560.2 1153.4 560.2C1153.6 560.2 1153.8 596.9 1154.0 596.9C1154.4 596.9 1154.6 584.7 1155.0 584.7C1155.0 584.7 1155.0 603.1 1155.0 603.1C1155.4 603.1 1155.6 590.8 1156.0 590.8C1156.6 590.8 1157.1 578.6 1157.7 578.6C1158.0 578.6 1158.1 596.9 1158.4 596.9C1158.7 596.9 1159.0 603.1 1159.3 603.1C1159.6 603.1 1159.7 584.7 1160.0 584.7C1160.4 584.7 1160.8 560.2 1161.2 560.2C1161.5 560.2 1161.7 596.9 1162.0 596.9C1162.4 596.9 1162.6 590.8 1163.0 590.8C1163.7 590.8 1164.3 603.1 1165.0 603.1C1165.7 603.1 1166.3 596.9 1167.0 596.9C1167.4 596.9 1167.6 590.8 1168.0 590.8C1168.7 590.8 1169.3 603.1 1170.0 603.1C1170.4 603.1 1170.6 596.9 1171.0 596.9C1171.4 596.9 1171.6 590.8 1172.0 590.8C1172.6 590.8 1173.1 547.9 1173.7 547.9C1173.9 547.9 1174.1 596.9 1174.3 596.9C1174.6 596.9 1174.7 584.7 1175.0 584.7C1176.1 584.7 1176.9 590.8 1178.0 590.8C1178.0 590.8 1178.0 596.9 1178.0 596.9C1178.7 596.9 1179.3 584.7 1180.0 584.7C1180.3 584.7 1180.6 590.8 1180.9 590.8C1181.3 590.8 1181.6 596.9 1182.0 596.9C1183.1 596.9 1183.9 590.8 1185.0 590.8C1185.7 590.8 1186.2 596.9 1186.9 596.9C1188.0 596.9 1188.9 590.8 1190.0 590.8C1190.4 590.8 1190.6 596.9 1191.0 596.9C1191.8 596.9 1192.3 590.8 1193.1 590.8C1193.5 590.8 1193.8 572.4 1194.2 572.4C1194.5 572.4 1194.7 596.9 1195.0 596.9C1195.4 596.9 1195.6 584.7 1196.0 584.7C1196.4 584.7 1196.6 590.8 1197.0 590.8C1197.0 590.8 1197.0 603.1 1197.0 603.1C1197.5 603.1 1197.9 511.1 1198.4 511.1C1198.6 511.1 1198.8 596.9 1199.0 596.9C1199.1 596.9 1199.3 603.1 1199.4 603.1C1199.6 603.1 1199.8 584.7 1200.0 584.7C1200.7 584.7 1201.2 566.3 1201.9 566.3C1202.2 566.3 1202.3 590.8 1202.6 590.8C1203.1 590.8 1203.5 584.7 1204.0 584.7C1204.0 584.7 1204.0 596.9 1204.0 596.9C1204.7 596.9 1205.3 590.8 1206.0 590.8C1206.4 590.8 1206.6 603.1 1207.0 603.1C1207.4 603.1 1207.6 596.9 1208.0 596.9C1208.5 596.9 1208.9 603.1 1209.4 603.1C1209.6 603.1 1209.8 584.7 1210.0 584.7C1210.7 584.7 1211.3 578.6 1212.0 578.6C1212.1 578.6 1212.2 590.8 1212.3 590.8C1212.6 590.8 1212.7 596.9 1213.0 596.9C1213.6 596.9 1213.9 560.2 1214.5 560.2C1214.7 560.2 1214.8 584.7 1215.0 584.7C1215.7 584.7 1216.3 578.6 1217.0 578.6C1217.4 578.6 1217.8 590.8 1218.2 590.8C1218.5 590.8 1218.7 596.9 1219.0 596.9C1219.6 596.9 1220.1 572.4 1220.7 572.4C1221.2 572.4 1221.5 584.7 1222.0 584.7C1222.4 584.7 1222.6 596.9 1223.0 596.9C1223.6 596.9 1223.9 590.8 1224.5 590.8C1225.6 590.8 1226.5 603.1 1227.6 603.1C1227.7 603.1 1227.9 584.7 1228.0 584.7C1228.4 584.7 1228.6 596.9 1229.0 596.9C1229.4 596.9 1229.6 603.1 1230.0 603.1C1230.3 603.1 1230.5 590.8 1230.8 590.8C1231.2 590.8 1231.6 596.9 1232.0 596.9C1232.4 596.9 1232.6 584.7 1233.0 584.7C1233.6 584.7 1233.9 572.4 1234.5 572.4C1234.8 572.4 1235.1 566.3 1235.4 566.3C1235.6 566.3 1235.8 596.9 1236.0 596.9C1236.4 596.9 1236.6 572.4 1237.0 572.4C1237.0 572.4 1237.0 590.8 1237.0 590.8C1237.9 590.8 1238.6 603.1 1239.5 603.1C1239.7 603.1 1239.8 584.7 1240.0 584.7C1240.4 584.7 1240.6 596.9 1241.0 596.9C1241.7 596.9 1242.3 590.8 1243.0 590.8C1243.4 590.8 1243.6 603.1 1244.0 603.1C1244.7 603.1 1245.3 596.9 1246.0 596.9C1246.4 596.9 1246.6 584.7 1247.0 584.7C1247.0 584.7 1247.0 603.1 1247.0 603.1C1247.7 603.1 1248.3 590.8 1249.0 590.8C1249.4 590.8 1249.6 603.1 1250.0 603.1C1250.6 603.1 1250.9 578.6 1251.5 578.6C1251.7 578.6 1251.8 596.9 1252.0 596.9C1252.4 596.9 1252.6 584.7 1253.0 584.7C1253.8 584.7 1254.4 578.6 1255.2 578.6C1255.5 578.6 1255.7 590.8 1256.0 590.8C1256.4 590.8 1256.7 596.9 1257.1 596.9C1257.4 596.9 1257.7 584.7 1258.0 584.7C1258.7 584.7 1259.3 590.8 1260.0 590.8C1260.0 590.8 1260.0 596.9 1260.0 596.9C1260.3 596.9 1260.6 603.1 1260.9 603.1C1261.1 603.1 1261.3 566.3 1261.5 566.3C1262.2 566.3 1262.7 596.9 1263.4 596.9L1263.4 609.2L31.0 609.2Z" fill="#5f5a7a" fill-opacity="0.42"/>
<path d="M31.0 596.9C58.8 596.9 78.2 603.1 106.0 603.1C107.9 603.1 109.1 603.1 111.0 603.1C155.8 603.1 187.2 603.1 232.0 603.1C244.7 603.1 253.7 590.8 266.4 590.8C272.9 590.8 277.5 603.1 284.0 603.1C286.2 603.1 287.8 584.7 290.0 584.7C303.1 584.7 312.3 590.8 325.4 590.8C325.7 590.8 326.0 603.1 326.3 603.1C333.4 603.1 338.3 603.1 345.4 603.1C347.0 603.1 348.2 603.1 349.8 603.1C350.0 603.1 350.2 596.9 350.4 596.9C350.9 596.9 351.2 584.7 351.7 584.7C351.9 584.7 352.1 566.3 352.3 566.3C353.9 566.3 355.1 603.1 356.7 603.1C357.8 603.1 358.7 603.1 359.8 603.1C362.1 603.1 363.8 603.1 366.1 603.1C367.7 603.1 368.9 603.1 370.5 603.1C370.7 603.1 370.9 584.7 371.1 584.7C371.7 584.7 372.1 560.2 372.7 560.2C373.0 560.2 373.2 596.9 373.5 596.9C374.9 596.9 376.0 603.1 377.4 603.1C379.7 603.1 381.3 603.1 383.6 603.1C384.9 603.1 385.7 590.8 387.0 590.8C387.9 590.8 388.4 578.6 389.3 578.6C390.9 578.6 392.1 596.9 393.7 596.9C394.1 596.9 394.5 603.1 394.9 603.1C399.8 603.1 403.2 603.1 408.1 603.1C409.5 603.1 410.5 596.9 411.9 596.9C412.3 596.9 412.7 578.6 413.1 578.6C413.6 578.6 413.9 603.1 414.4 603.1C415.7 603.1 416.7 590.8 418.0 590.8C418.3 590.8 418.5 603.1 418.8 603.1C421.6 603.1 423.5 603.1 426.3 603.1C428.2 603.1 429.4 603.1 431.3 603.1C433.0 603.1 434.3 596.9 436.0 596.9C437.0 596.9 437.8 603.1 438.8 603.1C440.2 603.1 441.2 603.1 442.6 603.1C444.0 603.1 444.9 603.1 446.3 603.1C447.0 603.1 447.5 596.9 448.2 596.9C449.4 596.9 450.2 603.1 451.4 603.1C451.6 603.1 451.8 584.7 452.0 584.7C452.3 584.7 452.6 566.3 452.9 566.3C453.5 566.3 453.9 596.9 454.5 596.9C456.4 596.9 457.6 603.1 459.5 603.1C460.6 603.1 461.5 603.1 462.6 603.1C464.0 603.1 465.0 603.1 466.4 603.1C467.5 603.1 468.4 603.1 469.5 603.1C470.2 603.1 470.7 590.8 471.4 590.8C471.9 590.8 472.2 603.1 472.7 603.1C473.6 603.1 474.3 603.1 475.2 603.1C475.9 603.1 476.3 584.7 477.0 584.7C480.9 584.7 483.5 584.7 487.4 584.7C487.5 584.7 487.6 603.1 487.7 603.1C488.9 603.1 489.7 603.1 490.9 603.1C491.0 603.1 491.2 603.1 491.3 603.1C491.8 603.1 492.2 596.9 492.7 596.9C493.1 596.9 493.4 596.9 493.8 596.9C493.8 596.9 493.8 603.1 493.8 603.1C493.9 603.1 493.9 603.1 494.0 603.1C494.2 603.1 494.4 566.3 494.6 566.3C494.7 566.3 494.9 566.3 495.0 566.3C495.5 566.3 495.8 603.1 496.3 603.1C496.9 603.1 497.2 584.7 497.8 584.7C498.4 584.7 498.8 603.1 499.4 603.1C500.5 603.1 501.4 603.1 502.5 603.1C503.9 603.1 504.9 596.9 506.3 596.9C506.8 596.9 507.1 603.1 507.6 603.1C508.3 603.1 508.7 578.6 509.4 578.6C509.4 578.6 509.4 596.9 509.4 596.9C509.9 596.9 510.2 603.1 510.7 603.1C511.6 603.1 512.3 596.9 513.2 596.9C513.4 596.9 513.6 603.1 513.8 603.1C515.4 603.1 516.6 590.8 518.2 590.8C518.2 590.8 518.2 603.1 518.2 603.1C521.5 603.1 523.7 590.8 527.0 590.8C528.4 590.8 529.4 596.9 530.8 596.9C531.9 596.9 532.8 596.9 533.9 596.9C534.8 596.9 535.5 578.6 536.4 578.6C537.1 578.6 537.6 603.1 538.3 603.1C539.4 603.1 540.3 603.1 541.4 603.1C543.5 603.1 544.9 596.9 547.0 596.9C547.5 596.9 547.8 578.6 548.3 578.6C548.3 578.6 548.3 603.1 548.3 603.1C549.0 603.1 549.5 596.9 550.2 596.9C550.9 596.9 551.3 603.1 552.0 603.1C552.8 603.1 553.4 584.7 554.2 584.7C554.8 584.7 555.2 603.1 555.8 603.1C556.7 603.1 557.4 596.9 558.3 596.9C561.8 596.9 564.2 590.8 567.7 590.8C568.3 590.8 568.6 572.4 569.2 572.4C570.3 572.4 571.0 603.1 572.1 603.1C573.3 603.1 574.1 566.3 575.3 566.3C575.9 566.3 576.3 584.7 576.9 584.7C577.5 584.7 577.8 603.1 578.4 603.1C580.3 603.1 581.5 603.1 583.4 603.1C585.5 603.1 586.9 596.9 589.0 596.9C589.5 596.9 589.8 603.1 590.3 603.1C591.7 603.1 592.7 603.1 594.1 603.1C594.3 603.1 594.5 596.9 594.7 596.9C596.1 596.9 597.1 603.1 598.5 603.1C600.4 603.1 601.6 603.1 603.5 603.1C604.9 603.1 605.8 603.1 607.2 603.1C607.9 603.1 608.4 584.7 609.1 584.7C609.8 584.7 610.3 603.1 611.0 603.1C612.4 603.1 613.4 603.1 614.8 603.1C615.9 603.1 616.8 603.1 617.9 603.1C619.3 603.1 620.3 603.1 621.7 603.1C623.1 603.1 624.0 603.1 625.4 603.1C627.7 603.1 629.4 596.9 631.7 596.9C631.8 596.9 631.9 584.7 632.0 584.7C632.1 584.7 632.2 603.1 632.3 603.1C633.7 603.1 634.7 603.1 636.1 603.1C636.8 603.1 637.3 596.9 638.0 596.9C641.6 596.9 644.2 603.1 647.8 603.1C647.9 603.1 647.9 603.1 648.0 603.1C648.6 603.1 649.0 590.8 649.6 590.8C650.1 590.8 650.4 603.1 650.9 603.1C652.0 603.1 652.9 603.1 654.0 603.1C655.2 603.1 656.0 603.1 657.2 603.1C658.3 603.1 659.2 603.1 660.3 603.1C661.7 603.1 662.7 603.1 664.1 603.1C665.2 603.1 666.1 603.1 667.2 603.1C668.3 603.1 669.2 603.1 670.3 603.1C672.6 603.1 674.3 596.9 676.6 596.9C677.9 596.9 678.7 603.1 680.0 603.1C683.9 603.1 686.5 603.1 690.4 603.1C691.8 603.1 692.8 603.1 694.2 603.1C695.5 603.1 696.4 596.9 697.7 596.9C698.0 596.9 698.2 584.7 698.5 584.7C703.4 584.7 706.8 596.9 711.7 596.9C711.9 596.9 712.1 603.1 712.3 603.1C713.5 603.1 714.3 603.1 715.5 603.1C716.6 603.1 717.5 603.1 718.6 603.1C718.7 603.1 718.8 554.0 718.9 554.0C719.2 554.0 719.3 578.6 719.6 578.6C722.0 578.6 723.7 603.1 726.1 603.1C727.7 603.1 728.9 603.1 730.5 603.1C731.7 603.1 732.5 603.1 733.7 603.1C735.1 603.1 736.0 603.1 737.4 603.1C739.7 603.1 741.4 603.1 743.7 603.1C744.8 603.1 745.7 603.1 746.8 603.1C749.7 603.1 751.7 603.1 754.6 603.1C757.5 603.1 759.6 596.9 762.5 596.9C762.8 596.9 763.1 603.1 763.4 603.1C766.3 603.1 768.4 603.1 771.3 603.1C772.7 603.1 773.6 603.1 775.0 603.1C776.4 603.1 777.4 584.7 778.8 584.7C779.0 584.7 779.2 596.9 779.4 596.9C780.1 596.9 780.6 603.1 781.3 603.1C782.4 603.1 783.3 603.1 784.4 603.1C787.9 603.1 790.3 596.9 793.8 596.9C796.1 596.9 797.8 603.1 800.1 603.1C800.2 603.1 800.4 603.1 800.5 603.1C801.5 603.1 802.2 603.1 803.2 603.1C803.6 603.1 803.9 603.1 804.3 603.1C806.2 603.1 807.6 596.9 809.5 596.9C810.8 596.9 811.7 584.7 813.0 584.7C813.5 584.7 813.8 603.1 814.3 603.1C815.4 603.1 816.3 603.1 817.4 603.1C817.5 603.1 817.6 578.6 817.7 578.6C818.8 578.6 819.5 603.1 820.6 603.1C823.4 603.1 825.3 603.1 828.1 603.1C830.7 603.1 832.6 603.1 835.2 603.1C835.3 603.1 835.5 596.9 835.6 596.9C839.2 596.9 841.8 603.1 845.4 603.1C847.4 603.1 848.7 596.9 850.7 596.9C851.6 596.9 852.3 603.1 853.2 603.1C854.6 603.1 855.5 603.1 856.9 603.1C858.5 603.1 859.7 596.9 861.3 596.9C862.2 596.9 862.9 603.1 863.8 603.1C865.2 603.1 866.2 603.1 867.6 603.1C868.7 603.1 869.6 603.1 870.7 603.1C871.9 603.1 872.7 603.1 873.9 603.1C875.0 603.1 875.9 603.1 877.0 603.1C878.1 603.1 879.0 603.1 880.1 603.1C881.5 603.1 882.5 603.1 883.9 603.1C886.5 603.1 888.2 603.1 890.8 603.1C891.9 603.1 892.8 603.1 893.9 603.1C895.3 603.1 896.3 603.1 897.7 603.1C899.1 603.1 900.0 603.1 901.4 603.1C902.8 603.1 903.8 603.1 905.2 603.1C906.6 603.1 907.6 603.1 909.0 603.1C910.9 603.1 912.1 603.1 914.0 603.1C915.4 603.1 916.3 603.1 917.7 603.1C919.1 603.1 920.1 603.1 921.5 603.1C926.6 603.1 930.2 596.9 935.3 596.9C936.4 596.9 937.1 603.1 938.2 603.1C940.8 603.1 942.7 603.1 945.3 603.1C946.5 603.1 947.3 603.1 948.5 603.1C951.5 603.1 953.6 596.9 956.6 596.9C956.6 596.9 956.6 603.1 956.6 603.1C957.0 603.1 957.2 603.1 957.6 603.1C957.6 603.1 957.6 596.9 957.6 596.9C958.9 596.9 959.7 566.3 961.0 566.3C961.6 566.3 962.1 590.8 962.7 590.8C964.8 590.8 966.2 603.1 968.3 603.1C969.0 603.1 969.5 572.4 970.2 572.4C971.1 572.4 971.8 578.6 972.7 578.6C974.3 578.6 975.5 547.9 977.1 547.9C977.3 547.9 977.5 590.8 977.7 590.8C977.9 590.8 978.1 566.3 978.3 566.3C979.2 566.3 979.9 596.9 980.8 596.9C981.5 596.9 982.0 590.8 982.7 590.8C983.2 590.8 983.5 584.7 984.0 584.7C984.7 584.7 985.3 590.8 986.0 590.8C986.7 590.8 987.3 590.8 988.0 590.8C988.6 590.8 989.0 596.9 989.6 596.9C989.7 596.9 989.9 590.8 990.0 590.8C990.7 590.8 991.2 535.6 991.9 535.6C992.1 535.6 992.2 480.5 992.4 480.5C993.0 480.5 993.4 554.0 994.0 554.0C994.7 554.0 995.2 603.1 995.9 603.1C995.9 603.1 996.0 584.7 996.0 584.7C996.4 584.7 996.6 590.8 997.0 590.8C997.7 590.8 998.3 590.8 999.0 590.8C999.4 590.8 999.6 584.7 1000.0 584.7C1000.3 584.7 1000.4 572.4 1000.7 572.4C1001.0 572.4 1001.2 584.7 1001.5 584.7C1001.9 584.7 1002.1 554.0 1002.5 554.0C1002.7 554.0 1002.8 590.8 1003.0 590.8C1003.6 590.8 1004.1 603.1 1004.7 603.1C1004.8 603.1 1004.9 584.7 1005.0 584.7C1005.4 584.7 1005.6 590.8 1006.0 590.8C1006.7 590.8 1007.3 590.8 1008.0 590.8C1008.4 590.8 1008.6 584.7 1009.0 584.7C1009.3 584.7 1009.4 560.2 1009.7 560.2C1009.8 560.2 1009.9 584.7 1010.0 584.7C1010.7 584.7 1011.2 547.9 1011.9 547.9C1011.9 547.9 1012.0 590.8 1012.0 590.8C1013.0 590.8 1013.7 572.4 1014.7 572.4C1015.2 572.4 1015.5 584.7 1016.0 584.7C1016.4 584.7 1016.6 603.1 1017.0 603.1C1017.4 603.1 1017.6 590.8 1018.0 590.8C1018.6 590.8 1019.1 603.1 1019.7 603.1C1019.8 603.1 1019.9 584.7 1020.0 584.7C1020.4 584.7 1020.6 590.8 1021.0 590.8C1021.6 590.8 1021.9 572.4 1022.5 572.4C1022.9 572.4 1023.1 584.7 1023.5 584.7C1023.7 584.7 1023.8 584.7 1024.0 584.7C1024.4 584.7 1024.6 590.8 1025.0 590.8C1025.8 590.8 1026.4 590.8 1027.2 590.8C1027.5 590.8 1027.6 584.7 1027.9 584.7C1027.9 584.7 1028.0 584.7 1028.0 584.7C1028.6 584.7 1028.9 572.4 1029.5 572.4C1030.3 572.4 1030.8 554.0 1031.6 554.0C1032.1 554.0 1032.4 578.6 1032.9 578.6C1033.5 578.6 1033.9 523.4 1034.5 523.4C1034.8 523.4 1035.1 486.6 1035.4 486.6C1036.1 486.6 1036.6 511.1 1037.3 511.1C1037.7 511.1 1037.9 474.3 1038.3 474.3C1038.5 474.3 1038.6 468.2 1038.8 468.2C1039.2 468.2 1039.4 535.6 1039.8 535.6C1040.2 535.6 1040.6 560.2 1041.0 560.2C1041.5 560.2 1041.8 596.9 1042.3 596.9C1043.2 596.9 1043.9 584.7 1044.8 584.7C1045.0 584.7 1045.2 572.4 1045.4 572.4C1045.6 572.4 1045.8 560.2 1046.0 560.2C1046.3 560.2 1046.4 566.3 1046.7 566.3C1047.3 566.3 1047.7 547.9 1048.3 547.9C1048.6 547.9 1048.9 529.5 1049.2 529.5C1049.6 529.5 1050.0 560.2 1050.4 560.2C1050.6 560.2 1050.8 517.2 1051.0 517.2C1051.5 517.2 1051.8 431.4 1052.3 431.4C1053.0 431.4 1053.5 511.1 1054.2 511.1C1054.9 511.1 1055.3 535.6 1056.0 535.6C1056.3 535.6 1056.4 523.4 1056.7 523.4C1056.9 523.4 1057.1 560.2 1057.3 560.2C1057.8 560.2 1058.1 523.4 1058.6 523.4C1059.4 523.4 1060.0 578.6 1060.8 578.6C1061.0 578.6 1061.1 596.9 1061.3 596.9C1061.7 596.9 1061.9 603.1 1062.3 603.1C1062.9 603.1 1063.4 596.9 1064.0 596.9C1064.7 596.9 1065.3 603.1 1066.0 603.1C1066.4 603.1 1066.6 590.8 1067.0 590.8C1067.4 590.8 1067.6 596.9 1068.0 596.9C1068.4 596.9 1068.6 603.1 1069.0 603.1C1069.3 603.1 1069.6 566.3 1069.9 566.3C1070.3 566.3 1070.6 596.9 1071.0 596.9C1071.4 596.9 1071.6 603.1 1072.0 603.1C1072.1 603.1 1072.3 547.9 1072.4 547.9C1072.6 547.9 1072.8 578.6 1073.0 578.6C1073.4 578.6 1073.6 596.9 1074.0 596.9C1074.4 596.9 1074.6 590.8 1075.0 590.8C1075.4 590.8 1075.6 603.1 1076.0 603.1C1076.7 603.1 1077.3 596.9 1078.0 596.9C1078.5 596.9 1078.8 584.7 1079.3 584.7C1079.4 584.7 1079.5 596.9 1079.6 596.9C1079.7 596.9 1079.9 603.1 1080.0 603.1C1080.7 603.1 1081.3 590.8 1082.0 590.8C1082.4 590.8 1082.6 596.9 1083.0 596.9C1083.7 596.9 1084.3 603.1 1085.0 603.1C1086.1 603.1 1086.9 596.9 1088.0 596.9C1088.7 596.9 1089.3 590.8 1090.0 590.8C1090.2 590.8 1090.4 596.9 1090.6 596.9C1091.1 596.9 1091.5 596.9 1092.0 596.9C1092.6 596.9 1093.1 578.6 1093.7 578.6C1094.2 578.6 1094.5 590.8 1095.0 590.8C1095.4 590.8 1095.6 596.9 1096.0 596.9C1096.4 596.9 1096.8 590.8 1097.2 590.8C1097.9 590.8 1098.3 590.8 1099.0 590.8C1099.4 590.8 1099.6 596.9 1100.0 596.9C1100.9 596.9 1101.6 603.1 1102.5 603.1C1103.1 603.1 1103.4 596.9 1104.0 596.9C1104.7 596.9 1105.3 603.1 1106.0 603.1C1106.4 603.1 1106.6 603.1 1107.0 603.1C1107.2 603.1 1107.3 596.9 1107.5 596.9C1107.9 596.9 1108.1 596.9 1108.5 596.9C1108.7 596.9 1108.8 596.9 1109.0 596.9C1109.4 596.9 1109.6 590.8 1110.0 590.8C1110.4 590.8 1110.6 596.9 1111.0 596.9C1111.1 596.9 1111.1 578.6 1111.2 578.6C1111.6 578.6 1111.9 578.6 1112.3 578.6C1112.7 578.6 1113.1 596.9 1113.5 596.9C1113.7 596.9 1113.8 590.8 1114.0 590.8C1114.4 590.8 1114.6 584.7 1115.0 584.7C1115.4 584.7 1115.6 596.9 1116.0 596.9C1116.7 596.9 1117.3 590.8 1118.0 590.8C1118.4 590.8 1118.6 596.9 1119.0 596.9C1119.3 596.9 1119.5 584.7 1119.8 584.7C1120.6 584.7 1121.2 596.9 1122.0 596.9C1122.4 596.9 1122.6 590.8 1123.0 590.8C1123.4 590.8 1123.6 584.7 1124.0 584.7C1124.4 584.7 1124.6 596.9 1125.0 596.9C1125.6 596.9 1126.1 603.1 1126.7 603.1C1127.2 603.1 1127.5 590.8 1128.0 590.8C1128.7 590.8 1129.3 596.9 1130.0 596.9C1130.4 596.9 1130.6 590.8 1131.0 590.8C1131.5 590.8 1131.8 560.2 1132.3 560.2C1132.6 560.2 1132.7 578.6 1133.0 578.6C1133.4 578.6 1133.8 596.9 1134.2 596.9C1134.5 596.9 1134.7 584.7 1135.0 584.7C1135.6 584.7 1136.1 578.6 1136.7 578.6C1136.8 578.6 1136.9 596.9 1137.0 596.9C1137.4 596.9 1137.6 590.8 1138.0 590.8C1138.4 590.8 1138.6 584.7 1139.0 584.7C1139.3 584.7 1139.6 603.1 1139.9 603.1C1140.3 603.1 1140.6 578.6 1141.0 578.6C1141.0 578.6 1141.1 596.9 1141.1 596.9C1141.8 596.9 1142.3 590.8 1143.0 590.8C1143.4 590.8 1143.8 560.2 1144.2 560.2C1144.5 560.2 1144.7 596.9 1145.0 596.9C1145.4 596.9 1145.6 584.7 1146.0 584.7C1146.7 584.7 1147.3 603.1 1148.0 603.1C1148.4 603.1 1148.6 596.9 1149.0 596.9C1149.4 596.9 1149.6 590.8 1150.0 590.8C1150.4 590.8 1150.6 603.1 1151.0 603.1C1151.9 603.1 1152.5 560.2 1153.4 560.2C1153.6 560.2 1153.8 596.9 1154.0 596.9C1154.4 596.9 1154.6 584.7 1155.0 584.7C1155.0 584.7 1155.0 603.1 1155.0 603.1C1155.4 603.1 1155.6 590.8 1156.0 590.8C1156.6 590.8 1157.1 578.6 1157.7 578.6C1158.0 578.6 1158.1 596.9 1158.4 596.9C1158.7 596.9 1159.0 603.1 1159.3 603.1C1159.6 603.1 1159.7 584.7 1160.0 584.7C1160.4 584.7 1160.8 560.2 1161.2 560.2C1161.5 560.2 1161.7 596.9 1162.0 596.9C1162.4 596.9 1162.6 590.8 1163.0 590.8C1163.7 590.8 1164.3 603.1 1165.0 603.1C1165.7 603.1 1166.3 596.9 1167.0 596.9C1167.4 596.9 1167.6 590.8 1168.0 590.8C1168.7 590.8 1169.3 603.1 1170.0 603.1C1170.4 603.1 1170.6 596.9 1171.0 596.9C1171.4 596.9 1171.6 590.8 1172.0 590.8C1172.6 590.8 1173.1 547.9 1173.7 547.9C1173.9 547.9 1174.1 596.9 1174.3 596.9C1174.6 596.9 1174.7 584.7 1175.0 584.7C1176.1 584.7 1176.9 590.8 1178.0 590.8C1178.0 590.8 1178.0 596.9 1178.0 596.9C1178.7 596.9 1179.3 584.7 1180.0 584.7C1180.3 584.7 1180.6 590.8 1180.9 590.8C1181.3 590.8 1181.6 596.9 1182.0 596.9C1183.1 596.9 1183.9 590.8 1185.0 590.8C1185.7 590.8 1186.2 596.9 1186.9 596.9C1188.0 596.9 1188.9 590.8 1190.0 590.8C1190.4 590.8 1190.6 596.9 1191.0 596.9C1191.8 596.9 1192.3 590.8 1193.1 590.8C1193.5 590.8 1193.8 572.4 1194.2 572.4C1194.5 572.4 1194.7 596.9 1195.0 596.9C1195.4 596.9 1195.6 584.7 1196.0 584.7C1196.4 584.7 1196.6 590.8 1197.0 590.8C1197.0 590.8 1197.0 603.1 1197.0 603.1C1197.5 603.1 1197.9 511.1 1198.4 511.1C1198.6 511.1 1198.8 596.9 1199.0 596.9C1199.1 596.9 1199.3 603.1 1199.4 603.1C1199.6 603.1 1199.8 584.7 1200.0 584.7C1200.7 584.7 1201.2 566.3 1201.9 566.3C1202.2 566.3 1202.3 590.8 1202.6 590.8C1203.1 590.8 1203.5 584.7 1204.0 584.7C1204.0 584.7 1204.0 596.9 1204.0 596.9C1204.7 596.9 1205.3 590.8 1206.0 590.8C1206.4 590.8 1206.6 603.1 1207.0 603.1C1207.4 603.1 1207.6 596.9 1208.0 596.9C1208.5 596.9 1208.9 603.1 1209.4 603.1C1209.6 603.1 1209.8 584.7 1210.0 584.7C1210.7 584.7 1211.3 578.6 1212.0 578.6C1212.1 578.6 1212.2 590.8 1212.3 590.8C1212.6 590.8 1212.7 596.9 1213.0 596.9C1213.6 596.9 1213.9 560.2 1214.5 560.2C1214.7 560.2 1214.8 584.7 1215.0 584.7C1215.7 584.7 1216.3 578.6 1217.0 578.6C1217.4 578.6 1217.8 590.8 1218.2 590.8C1218.5 590.8 1218.7 596.9 1219.0 596.9C1219.6 596.9 1220.1 572.4 1220.7 572.4C1221.2 572.4 1221.5 584.7 1222.0 584.7C1222.4 584.7 1222.6 596.9 1223.0 596.9C1223.6 596.9 1223.9 590.8 1224.5 590.8C1225.6 590.8 1226.5 603.1 1227.6 603.1C1227.7 603.1 1227.9 584.7 1228.0 584.7C1228.4 584.7 1228.6 596.9 1229.0 596.9C1229.4 596.9 1229.6 603.1 1230.0 603.1C1230.3 603.1 1230.5 590.8 1230.8 590.8C1231.2 590.8 1231.6 596.9 1232.0 596.9C1232.4 596.9 1232.6 584.7 1233.0 584.7C1233.6 584.7 1233.9 572.4 1234.5 572.4C1234.8 572.4 1235.1 566.3 1235.4 566.3C1235.6 566.3 1235.8 596.9 1236.0 596.9C1236.4 596.9 1236.6 572.4 1237.0 572.4C1237.0 572.4 1237.0 590.8 1237.0 590.8C1237.9 590.8 1238.6 603.1 1239.5 603.1C1239.7 603.1 1239.8 584.7 1240.0 584.7C1240.4 584.7 1240.6 596.9 1241.0 596.9C1241.7 596.9 1242.3 590.8 1243.0 590.8C1243.4 590.8 1243.6 603.1 1244.0 603.1C1244.7 603.1 1245.3 596.9 1246.0 596.9C1246.4 596.9 1246.6 584.7 1247.0 584.7C1247.0 584.7 1247.0 603.1 1247.0 603.1C1247.7 603.1 1248.3 590.8 1249.0 590.8C1249.4 590.8 1249.6 603.1 1250.0 603.1C1250.6 603.1 1250.9 578.6 1251.5 578.6C1251.7 578.6 1251.8 596.9 1252.0 596.9C1252.4 596.9 1252.6 584.7 1253.0 584.7C1253.8 584.7 1254.4 578.6 1255.2 578.6C1255.5 578.6 1255.7 590.8 1256.0 590.8C1256.4 590.8 1256.7 596.9 1257.1 596.9C1257.4 596.9 1257.7 584.7 1258.0 584.7C1258.7 584.7 1259.3 590.8 1260.0 590.8C1260.0 590.8 1260.0 596.9 1260.0 596.9C1260.3 596.9 1260.6 603.1 1260.9 603.1C1261.1 603.1 1261.3 566.3 1261.5 566.3C1262.2 566.3 1262.7 596.9 1263.4 596.9" fill="none" stroke="#5a4a9d" stroke-width="2.2" stroke-linejoin="round" stroke-linecap="butt"/>
<g fill="#4d3f99" stroke="#e6e4f2" stroke-width="1.5">
<circle cx="31.0" cy="596.9" r="2.85"/>
<circle cx="106.0" cy="603.1" r="2.85"/>
<circle cx="111.0" cy="603.1" r="2.85"/>
<circle cx="232.0" cy="603.1" r="2.85"/>
<circle cx="266.4" cy="590.8" r="2.85"/>
<circle cx="284.0" cy="603.1" r="2.85"/>
<circle cx="290.0" cy="584.7" r="2.85"/>
<circle cx="325.4" cy="590.8" r="2.85"/>
<circle cx="326.3" cy="603.1" r="2.85"/>
<circle cx="345.4" cy="603.1" r="2.85"/>
<circle cx="349.8" cy="603.1" r="2.85"/>
<circle cx="350.4" cy="596.9" r="2.85"/>
<circle cx="351.7" cy="584.7" r="2.85"/>
<circle cx="352.3" cy="566.3" r="2.85"/>
<circle cx="356.7" cy="603.1" r="2.85"/>
<circle cx="359.8" cy="603.1" r="2.85"/>
<circle cx="366.1" cy="603.1" r="2.85"/>
<circle cx="370.5" cy="603.1" r="2.85"/>
<circle cx="371.1" cy="584.7" r="2.85"/>
<circle cx="372.7" cy="560.2" r="2.85"/>
<circle cx="373.5" cy="596.9" r="2.85"/>
<circle cx="377.4" cy="603.1" r="2.85"/>
<circle cx="383.6" cy="603.1" r="2.85"/>
<circle cx="387.0" cy="590.8" r="2.85"/>
<circle cx="389.3" cy="578.6" r="2.85"/>
<circle cx="393.7" cy="596.9" r="2.85"/>
<circle cx="394.9" cy="603.1" r="2.85"/>
<circle cx="408.1" cy="603.1" r="2.85"/>
<circle cx="411.9" cy="596.9" r="2.85"/>
<circle cx="413.1" cy="578.6" r="2.85"/>
<circle cx="414.4" cy="603.1" r="2.85"/>
<circle cx="418.0" cy="590.8" r="2.85"/>
<circle cx="418.8" cy="603.1" r="2.85"/>
<circle cx="426.3" cy="603.1" r="2.85"/>
<circle cx="431.3" cy="603.1" r="2.85"/>
<circle cx="436.0" cy="596.9" r="2.85"/>
<circle cx="438.8" cy="603.1" r="2.85"/>
<circle cx="442.6" cy="603.1" r="2.85"/>
<circle cx="446.3" cy="603.1" r="2.85"/>
<circle cx="448.2" cy="596.9" r="2.85"/>
<circle cx="451.4" cy="603.1" r="2.85"/>
<circle cx="452.0" cy="584.7" r="2.85"/>
<circle cx="452.9" cy="566.3" r="2.85"/>
<circle cx="454.5" cy="596.9" r="2.85"/>
<circle cx="459.5" cy="603.1" r="2.85"/>
<circle cx="462.6" cy="603.1" r="2.85"/>
<circle cx="466.4" cy="603.1" r="2.85"/>
<circle cx="469.5" cy="603.1" r="2.85"/>
<circle cx="471.4" cy="590.8" r="2.85"/>
<circle cx="472.7" cy="603.1" r="2.85"/>
<circle cx="475.2" cy="603.1" r="2.85"/>
<circle cx="477.0" cy="584.7" r="2.85"/>
<circle cx="487.4" cy="584.7" r="2.85"/>
<circle cx="487.7" cy="603.1" r="2.85"/>
<circle cx="490.9" cy="603.1" r="2.85"/>
<circle cx="491.3" cy="603.1" r="2.85"/>
<circle cx="492.7" cy="596.9" r="2.85"/>
<circle cx="493.8" cy="596.9" r="2.85"/>
<circle cx="493.8" cy="603.1" r="2.85"/>
<circle cx="494.0" cy="603.1" r="2.85"/>
<circle cx="494.6" cy="566.3" r="2.85"/>
<circle cx="495.0" cy="566.3" r="2.85"/>
<circle cx="496.3" cy="603.1" r="2.85"/>
<circle cx="497.8" cy="584.7" r="2.85"/>
<circle cx="499.4" cy="603.1" r="2.85"/>
<circle cx="502.5" cy="603.1" r="2.85"/>
<circle cx="506.3" cy="596.9" r="2.85"/>
<circle cx="507.6" cy="603.1" r="2.85"/>
<circle cx="509.4" cy="578.6" r="2.85"/>
<circle cx="509.4" cy="596.9" r="2.85"/>
<circle cx="510.7" cy="603.1" r="2.85"/>
<circle cx="513.2" cy="596.9" r="2.85"/>
<circle cx="513.8" cy="603.1" r="2.85"/>
<circle cx="518.2" cy="590.8" r="2.85"/>
<circle cx="518.2" cy="603.1" r="2.85"/>
<circle cx="527.0" cy="590.8" r="2.85"/>
<circle cx="530.8" cy="596.9" r="2.85"/>
<circle cx="533.9" cy="596.9" r="2.85"/>
<circle cx="536.4" cy="578.6" r="2.85"/>
<circle cx="538.3" cy="603.1" r="2.85"/>
<circle cx="541.4" cy="603.1" r="2.85"/>
<circle cx="547.0" cy="596.9" r="2.85"/>
<circle cx="548.3" cy="578.6" r="2.85"/>
<circle cx="548.3" cy="603.1" r="2.85"/>
<circle cx="550.2" cy="596.9" r="2.85"/>
<circle cx="552.0" cy="603.1" r="2.85"/>
<circle cx="554.2" cy="584.7" r="2.85"/>
<circle cx="555.8" cy="603.1" r="2.85"/>
<circle cx="558.3" cy="596.9" r="2.85"/>
<circle cx="567.7" cy="590.8" r="2.85"/>
<circle cx="569.2" cy="572.4" r="2.85"/>
<circle cx="572.1" cy="603.1" r="2.85"/>
<circle cx="575.3" cy="566.3" r="2.85"/>
<circle cx="576.9" cy="584.7" r="2.85"/>
<circle cx="578.4" cy="603.1" r="2.85"/>
<circle cx="583.4" cy="603.1" r="2.85"/>
<circle cx="589.0" cy="596.9" r="2.85"/>
<circle cx="590.3" cy="603.1" r="2.85"/>
<circle cx="594.1" cy="603.1" r="2.85"/>
<circle cx="594.7" cy="596.9" r="2.85"/>
<circle cx="598.5" cy="603.1" r="2.85"/>
<circle cx="603.5" cy="603.1" r="2.85"/>
<circle cx="607.2" cy="603.1" r="2.85"/>
<circle cx="609.1" cy="584.7" r="2.85"/>
<circle cx="611.0" cy="603.1" r="2.85"/>
<circle cx="614.8" cy="603.1" r="2.85"/>
<circle cx="617.9" cy="603.1" r="2.85"/>
<circle cx="621.7" cy="603.1" r="2.85"/>
<circle cx="625.4" cy="603.1" r="2.85"/>
<circle cx="631.7" cy="596.9" r="2.85"/>
<circle cx="632.0" cy="584.7" r="2.85"/>
<circle cx="632.3" cy="603.1" r="2.85"/>
<circle cx="636.1" cy="603.1" r="2.85"/>
<circle cx="638.0" cy="596.9" r="2.85"/>
<circle cx="647.8" cy="603.1" r="2.85"/>
<circle cx="648.0" cy="603.1" r="2.85"/>
<circle cx="649.6" cy="590.8" r="2.85"/>
<circle cx="650.9" cy="603.1" r="2.85"/>
<circle cx="654.0" cy="603.1" r="2.85"/>
<circle cx="657.2" cy="603.1" r="2.85"/>
<circle cx="660.3" cy="603.1" r="2.85"/>
<circle cx="664.1" cy="603.1" r="2.85"/>
<circle cx="667.2" cy="603.1" r="2.85"/>
<circle cx="670.3" cy="603.1" r="2.85"/>
<circle cx="676.6" cy="596.9" r="2.85"/>
<circle cx="680.0" cy="603.1" r="2.85"/>
<circle cx="690.4" cy="603.1" r="2.85"/>
<circle cx="694.2" cy="603.1" r="2.85"/>
<circle cx="697.7" cy="596.9" r="2.85"/>
<circle cx="698.5" cy="584.7" r="2.85"/>
<circle cx="711.7" cy="596.9" r="2.85"/>
<circle cx="712.3" cy="603.1" r="2.85"/>
<circle cx="715.5" cy="603.1" r="2.85"/>
<circle cx="718.6" cy="603.1" r="2.85"/>
<circle cx="718.9" cy="554.0" r="2.85"/>
<circle cx="719.6" cy="578.6" r="2.85"/>
<circle cx="726.1" cy="603.1" r="2.85"/>
<circle cx="730.5" cy="603.1" r="2.85"/>
<circle cx="733.7" cy="603.1" r="2.85"/>
<circle cx="737.4" cy="603.1" r="2.85"/>
<circle cx="743.7" cy="603.1" r="2.85"/>
<circle cx="746.8" cy="603.1" r="2.85"/>
<circle cx="754.6" cy="603.1" r="2.85"/>
<circle cx="762.5" cy="596.9" r="2.85"/>
<circle cx="763.4" cy="603.1" r="2.85"/>
<circle cx="771.3" cy="603.1" r="2.85"/>
<circle cx="775.0" cy="603.1" r="2.85"/>
<circle cx="778.8" cy="584.7" r="2.85"/>
<circle cx="779.4" cy="596.9" r="2.85"/>
<circle cx="781.3" cy="603.1" r="2.85"/>
<circle cx="784.4" cy="603.1" r="2.85"/>
<circle cx="793.8" cy="596.9" r="2.85"/>
<circle cx="800.1" cy="603.1" r="2.85"/>
<circle cx="800.5" cy="603.1" r="2.85"/>
<circle cx="803.2" cy="603.1" r="2.85"/>
<circle cx="804.3" cy="603.1" r="2.85"/>
<circle cx="809.5" cy="596.9" r="2.85"/>
<circle cx="813.0" cy="584.7" r="2.85"/>
<circle cx="814.3" cy="603.1" r="2.85"/>
<circle cx="817.4" cy="603.1" r="2.85"/>
<circle cx="817.7" cy="578.6" r="2.85"/>
<circle cx="820.6" cy="603.1" r="2.85"/>
<circle cx="828.1" cy="603.1" r="2.85"/>
<circle cx="835.2" cy="603.1" r="2.85"/>
<circle cx="835.6" cy="596.9" r="2.85"/>
<circle cx="845.4" cy="603.1" r="2.85"/>
<circle cx="850.7" cy="596.9" r="2.85"/>
<circle cx="853.2" cy="603.1" r="2.85"/>
<circle cx="856.9" cy="603.1" r="2.85"/>
<circle cx="861.3" cy="596.9" r="2.85"/>
<circle cx="863.8" cy="603.1" r="2.85"/>
<circle cx="867.6" cy="603.1" r="2.85"/>
<circle cx="870.7" cy="603.1" r="2.85"/>
<circle cx="873.9" cy="603.1" r="2.85"/>
<circle cx="877.0" cy="603.1" r="2.85"/>
<circle cx="880.1" cy="603.1" r="2.85"/>
<circle cx="883.9" cy="603.1" r="2.85"/>
<circle cx="890.8" cy="603.1" r="2.85"/>
<circle cx="893.9" cy="603.1" r="2.85"/>
<circle cx="897.7" cy="603.1" r="2.85"/>
<circle cx="901.4" cy="603.1" r="2.85"/>
<circle cx="905.2" cy="603.1" r="2.85"/>
<circle cx="909.0" cy="603.1" r="2.85"/>
<circle cx="914.0" cy="603.1" r="2.85"/>
<circle cx="917.7" cy="603.1" r="2.85"/>
<circle cx="921.5" cy="603.1" r="2.85"/>
<circle cx="935.3" cy="596.9" r="2.85"/>
<circle cx="938.2" cy="603.1" r="2.85"/>
<circle cx="945.3" cy="603.1" r="2.85"/>
<circle cx="948.5" cy="603.1" r="2.85"/>
<circle cx="956.6" cy="596.9" r="2.85"/>
<circle cx="956.6" cy="603.1" r="2.85"/>
<circle cx="957.6" cy="603.1" r="2.85"/>
<circle cx="957.6" cy="596.9" r="2.85"/>
<circle cx="961.0" cy="566.3" r="2.85"/>
<circle cx="962.7" cy="590.8" r="2.85"/>
<circle cx="968.3" cy="603.1" r="2.85"/>
<circle cx="970.2" cy="572.4" r="2.85"/>
<circle cx="972.7" cy="578.6" r="2.85"/>
<circle cx="977.1" cy="547.9" r="2.85"/>
<circle cx="977.7" cy="590.8" r="2.85"/>
<circle cx="978.3" cy="566.3" r="2.85"/>
<circle cx="980.8" cy="596.9" r="2.85"/>
<circle cx="982.7" cy="590.8" r="2.85"/>
<circle cx="984.0" cy="584.7" r="2.85"/>
<circle cx="986.0" cy="590.8" r="2.85"/>
<circle cx="988.0" cy="590.8" r="2.85"/>
<circle cx="989.6" cy="596.9" r="2.85"/>
<circle cx="990.0" cy="590.8" r="2.85"/>
<circle cx="991.9" cy="535.6" r="2.85"/>
<circle cx="992.4" cy="480.5" r="2.85"/>
<circle cx="994.0" cy="554.0" r="2.85"/>
<circle cx="995.9" cy="603.1" r="2.85"/>
<circle cx="996.0" cy="584.7" r="2.85"/>
<circle cx="997.0" cy="590.8" r="2.85"/>
<circle cx="999.0" cy="590.8" r="2.85"/>
<circle cx="1000.0" cy="584.7" r="2.85"/>
<circle cx="1000.7" cy="572.4" r="2.85"/>
<circle cx="1001.5" cy="584.7" r="2.85"/>
<circle cx="1002.5" cy="554.0" r="2.85"/>
<circle cx="1003.0" cy="590.8" r="2.85"/>
<circle cx="1004.7" cy="603.1" r="2.85"/>
<circle cx="1005.0" cy="584.7" r="2.85"/>
<circle cx="1006.0" cy="590.8" r="2.85"/>
<circle cx="1008.0" cy="590.8" r="2.85"/>
<circle cx="1009.0" cy="584.7" r="2.85"/>
<circle cx="1009.7" cy="560.2" r="2.85"/>
<circle cx="1010.0" cy="584.7" r="2.85"/>
<circle cx="1011.9" cy="547.9" r="2.85"/>
<circle cx="1012.0" cy="590.8" r="2.85"/>
<circle cx="1014.7" cy="572.4" r="2.85"/>
<circle cx="1016.0" cy="584.7" r="2.85"/>
<circle cx="1017.0" cy="603.1" r="2.85"/>
<circle cx="1018.0" cy="590.8" r="2.85"/>
<circle cx="1019.7" cy="603.1" r="2.85"/>
<circle cx="1020.0" cy="584.7" r="2.85"/>
<circle cx="1021.0" cy="590.8" r="2.85"/>
<circle cx="1022.5" cy="572.4" r="2.85"/>
<circle cx="1023.5" cy="584.7" r="2.85"/>
<circle cx="1024.0" cy="584.7" r="2.85"/>
<circle cx="1025.0" cy="590.8" r="2.85"/>
<circle cx="1027.2" cy="590.8" r="2.85"/>
<circle cx="1027.9" cy="584.7" r="2.85"/>
<circle cx="1028.0" cy="584.7" r="2.85"/>
<circle cx="1029.5" cy="572.4" r="2.85"/>
<circle cx="1031.6" cy="554.0" r="2.85"/>
<circle cx="1032.9" cy="578.6" r="2.85"/>
<circle cx="1034.5" cy="523.4" r="2.85"/>
<circle cx="1035.4" cy="486.6" r="2.85"/>
<circle cx="1037.3" cy="511.1" r="2.85"/>
<circle cx="1038.3" cy="474.3" r="2.85"/>
<circle cx="1038.8" cy="468.2" r="2.85"/>
<circle cx="1039.8" cy="535.6" r="2.85"/>
<circle cx="1041.0" cy="560.2" r="2.85"/>
<circle cx="1042.3" cy="596.9" r="2.85"/>
<circle cx="1044.8" cy="584.7" r="2.85"/>
<circle cx="1045.4" cy="572.4" r="2.85"/>
<circle cx="1046.0" cy="560.2" r="2.85"/>
<circle cx="1046.7" cy="566.3" r="2.85"/>
<circle cx="1048.3" cy="547.9" r="2.85"/>
<circle cx="1049.2" cy="529.5" r="2.85"/>
<circle cx="1050.4" cy="560.2" r="2.85"/>
<circle cx="1051.0" cy="517.2" r="2.85"/>
<circle cx="1052.3" cy="431.4" r="2.85"/>
<circle cx="1054.2" cy="511.1" r="2.85"/>
<circle cx="1056.0" cy="535.6" r="2.85"/>
<circle cx="1056.7" cy="523.4" r="2.85"/>
<circle cx="1057.3" cy="560.2" r="2.85"/>
<circle cx="1058.6" cy="523.4" r="2.85"/>
<circle cx="1060.8" cy="578.6" r="2.85"/>
<circle cx="1061.3" cy="596.9" r="2.85"/>
<circle cx="1062.3" cy="603.1" r="2.85"/>
<circle cx="1064.0" cy="596.9" r="2.85"/>
<circle cx="1066.0" cy="603.1" r="2.85"/>
<circle cx="1067.0" cy="590.8" r="2.85"/>
<circle cx="1068.0" cy="596.9" r="2.85"/>
<circle cx="1069.0" cy="603.1" r="2.85"/>
<circle cx="1069.9" cy="566.3" r="2.85"/>
<circle cx="1071.0" cy="596.9" r="2.85"/>
<circle cx="1072.0" cy="603.1" r="2.85"/>
<circle cx="1072.4" cy="547.9" r="2.85"/>
<circle cx="1073.0" cy="578.6" r="2.85"/>
<circle cx="1074.0" cy="596.9" r="2.85"/>
<circle cx="1075.0" cy="590.8" r="2.85"/>
<circle cx="1076.0" cy="603.1" r="2.85"/>
<circle cx="1078.0" cy="596.9" r="2.85"/>
<circle cx="1079.3" cy="584.7" r="2.85"/>
<circle cx="1079.6" cy="596.9" r="2.85"/>
<circle cx="1080.0" cy="603.1" r="2.85"/>
<circle cx="1082.0" cy="590.8" r="2.85"/>
<circle cx="1083.0" cy="596.9" r="2.85"/>
<circle cx="1085.0" cy="603.1" r="2.85"/>
<circle cx="1088.0" cy="596.9" r="2.85"/>
<circle cx="1090.0" cy="590.8" r="2.85"/>
<circle cx="1090.6" cy="596.9" r="2.85"/>
<circle cx="1092.0" cy="596.9" r="2.85"/>
<circle cx="1093.7" cy="578.6" r="2.85"/>
<circle cx="1095.0" cy="590.8" r="2.85"/>
<circle cx="1096.0" cy="596.9" r="2.85"/>
<circle cx="1097.2" cy="590.8" r="2.85"/>
<circle cx="1099.0" cy="590.8" r="2.85"/>
<circle cx="1100.0" cy="596.9" r="2.85"/>
<circle cx="1102.5" cy="603.1" r="2.85"/>
<circle cx="1104.0" cy="596.9" r="2.85"/>
<circle cx="1106.0" cy="603.1" r="2.85"/>
<circle cx="1107.0" cy="603.1" r="2.85"/>
<circle cx="1107.5" cy="596.9" r="2.85"/>
<circle cx="1108.5" cy="596.9" r="2.85"/>
<circle cx="1109.0" cy="596.9" r="2.85"/>
<circle cx="1110.0" cy="590.8" r="2.85"/>
<circle cx="1111.0" cy="596.9" r="2.85"/>
<circle cx="1111.2" cy="578.6" r="2.85"/>
<circle cx="1112.3" cy="578.6" r="2.85"/>
<circle cx="1113.5" cy="596.9" r="2.85"/>
<circle cx="1114.0" cy="590.8" r="2.85"/>
<circle cx="1115.0" cy="584.7" r="2.85"/>
<circle cx="1116.0" cy="596.9" r="2.85"/>
<circle cx="1118.0" cy="590.8" r="2.85"/>
<circle cx="1119.0" cy="596.9" r="2.85"/>
<circle cx="1119.8" cy="584.7" r="2.85"/>
<circle cx="1122.0" cy="596.9" r="2.85"/>
<circle cx="1123.0" cy="590.8" r="2.85"/>
<circle cx="1124.0" cy="584.7" r="2.85"/>
<circle cx="1125.0" cy="596.9" r="2.85"/>
<circle cx="1126.7" cy="603.1" r="2.85"/>
<circle cx="1128.0" cy="590.8" r="2.85"/>
<circle cx="1130.0" cy="596.9" r="2.85"/>
<circle cx="1131.0" cy="590.8" r="2.85"/>
<circle cx="1132.3" cy="560.2" r="2.85"/>
<circle cx="1133.0" cy="578.6" r="2.85"/>
<circle cx="1134.2" cy="596.9" r="2.85"/>
<circle cx="1135.0" cy="584.7" r="2.85"/>
<circle cx="1136.7" cy="578.6" r="2.85"/>
<circle cx="1137.0" cy="596.9" r="2.85"/>
<circle cx="1138.0" cy="590.8" r="2.85"/>
<circle cx="1139.0" cy="584.7" r="2.85"/>
<circle cx="1139.9" cy="603.1" r="2.85"/>
<circle cx="1141.0" cy="578.6" r="2.85"/>
<circle cx="1141.1" cy="596.9" r="2.85"/>
<circle cx="1143.0" cy="590.8" r="2.85"/>
<circle cx="1144.2" cy="560.2" r="2.85"/>
<circle cx="1145.0" cy="596.9" r="2.85"/>
<circle cx="1146.0" cy="584.7" r="2.85"/>
<circle cx="1148.0" cy="603.1" r="2.85"/>
<circle cx="1149.0" cy="596.9" r="2.85"/>
<circle cx="1150.0" cy="590.8" r="2.85"/>
<circle cx="1151.0" cy="603.1" r="2.85"/>
<circle cx="1153.4" cy="560.2" r="2.85"/>
<circle cx="1154.0" cy="596.9" r="2.85"/>
<circle cx="1155.0" cy="584.7" r="2.85"/>
<circle cx="1155.0" cy="603.1" r="2.85"/>
<circle cx="1156.0" cy="590.8" r="2.85"/>
<circle cx="1157.7" cy="578.6" r="2.85"/>
<circle cx="1158.4" cy="596.9" r="2.85"/>
<circle cx="1159.3" cy="603.1" r="2.85"/>
<circle cx="1160.0" cy="584.7" r="2.85"/>
<circle cx="1161.2" cy="560.2" r="2.85"/>
<circle cx="1162.0" cy="596.9" r="2.85"/>
<circle cx="1163.0" cy="590.8" r="2.85"/>
<circle cx="1165.0" cy="603.1" r="2.85"/>
<circle cx="1167.0" cy="596.9" r="2.85"/>
<circle cx="1168.0" cy="590.8" r="2.85"/>
<circle cx="1170.0" cy="603.1" r="2.85"/>
<circle cx="1171.0" cy="596.9" r="2.85"/>
<circle cx="1172.0" cy="590.8" r="2.85"/>
<circle cx="1173.7" cy="547.9" r="2.85"/>
<circle cx="1174.3" cy="596.9" r="2.85"/>
<circle cx="1175.0" cy="584.7" r="2.85"/>
<circle cx="1178.0" cy="590.8" r="2.85"/>
<circle cx="1178.0" cy="596.9" r="2.85"/>
<circle cx="1180.0" cy="584.7" r="2.85"/>
<circle cx="1180.9" cy="590.8" r="2.85"/>
<circle cx="1182.0" cy="596.9" r="2.85"/>
<circle cx="1185.0" cy="590.8" r="2.85"/>
<circle cx="1186.9" cy="596.9" r="2.85"/>
<circle cx="1190.0" cy="590.8" r="2.85"/>
<circle cx="1191.0" cy="596.9" r="2.85"/>
<circle cx="1193.1" cy="590.8" r="2.85"/>
<circle cx="1194.2" cy="572.4" r="2.85"/>
<circle cx="1195.0" cy="596.9" r="2.85"/>
<circle cx="1196.0" cy="584.7" r="2.85"/>
<circle cx="1197.0" cy="590.8" r="2.85"/>
<circle cx="1197.0" cy="603.1" r="2.85"/>
<circle cx="1198.4" cy="511.1" r="2.85"/>
<circle cx="1199.0" cy="596.9" r="2.85"/>
<circle cx="1199.4" cy="603.1" r="2.85"/>
<circle cx="1200.0" cy="584.7" r="2.85"/>
<circle cx="1201.9" cy="566.3" r="2.85"/>
<circle cx="1202.6" cy="590.8" r="2.85"/>
<circle cx="1204.0" cy="584.7" r="2.85"/>
<circle cx="1204.0" cy="596.9" r="2.85"/>
<circle cx="1206.0" cy="590.8" r="2.85"/>
<circle cx="1207.0" cy="603.1" r="2.85"/>
<circle cx="1208.0" cy="596.9" r="2.85"/>
<circle cx="1209.4" cy="603.1" r="2.85"/>
<circle cx="1210.0" cy="584.7" r="2.85"/>
<circle cx="1212.0" cy="578.6" r="2.85"/>
<circle cx="1212.3" cy="590.8" r="2.85"/>
<circle cx="1213.0" cy="596.9" r="2.85"/>
<circle cx="1214.5" cy="560.2" r="2.85"/>
<circle cx="1215.0" cy="584.7" r="2.85"/>
<circle cx="1217.0" cy="578.6" r="2.85"/>
<circle cx="1218.2" cy="590.8" r="2.85"/>
<circle cx="1219.0" cy="596.9" r="2.85"/>
<circle cx="1220.7" cy="572.4" r="2.85"/>
<circle cx="1222.0" cy="584.7" r="2.85"/>
<circle cx="1223.0" cy="596.9" r="2.85"/>
<circle cx="1224.5" cy="590.8" r="2.85"/>
<circle cx="1227.6" cy="603.1" r="2.85"/>
<circle cx="1228.0" cy="584.7" r="2.85"/>
<circle cx="1229.0" cy="596.9" r="2.85"/>
<circle cx="1230.0" cy="603.1" r="2.85"/>
<circle cx="1230.8" cy="590.8" r="2.85"/>
<circle cx="1232.0" cy="596.9" r="2.85"/>
<circle cx="1233.0" cy="584.7" r="2.85"/>
<circle cx="1234.5" cy="572.4" r="2.85"/>
<circle cx="1235.4" cy="566.3" r="2.85"/>
<circle cx="1236.0" cy="596.9" r="2.85"/>
<circle cx="1237.0" cy="572.4" r="2.85"/>
<circle cx="1237.0" cy="590.8" r="2.85"/>
<circle cx="1239.5" cy="603.1" r="2.85"/>
<circle cx="1240.0" cy="584.7" r="2.85"/>
<circle cx="1241.0" cy="596.9" r="2.85"/>
<circle cx="1243.0" cy="590.8" r="2.85"/>
<circle cx="1244.0" cy="603.1" r="2.85"/>
<circle cx="1246.0" cy="596.9" r="2.85"/>
<circle cx="1247.0" cy="584.7" r="2.85"/>
<circle cx="1247.0" cy="603.1" r="2.85"/>
<circle cx="1249.0" cy="590.8" r="2.85"/>
<circle cx="1250.0" cy="603.1" r="2.85"/>
<circle cx="1251.5" cy="578.6" r="2.85"/>
<circle cx="1252.0" cy="596.9" r="2.85"/>
<circle cx="1253.0" cy="584.7" r="2.85"/>
<circle cx="1255.2" cy="578.6" r="2.85"/>
<circle cx="1256.0" cy="590.8" r="2.85"/>
<circle cx="1257.1" cy="596.9" r="2.85"/>
<circle cx="1258.0" cy="584.7" r="2.85"/>
<circle cx="1260.0" cy="590.8" r="2.85"/>
<circle cx="1260.0" cy="596.9" r="2.85"/>
<circle cx="1260.9" cy="603.1" r="2.85"/>
<circle cx="1261.5" cy="566.3" r="2.85"/>
<circle cx="1263.4" cy="596.9" r="2.85"/>
</g>
<g font-family="Liberation Sans, sans-serif" font-weight="bold" font-size="7.6" text-anchor="middle" fill="#fff">
<rect x="26.7" y="584.4" width="8.6" height="8.4" rx="1.4" fill="#4b3d96" stroke="#bab6da" stroke-width="0.8"/>
<text x="31.0" y="591.3">2</text>
<rect x="101.7" y="590.6" width="8.6" height="8.4" rx="1.4" fill="#4b3d96" stroke="#bab6da" stroke-width="0.8"/>
<text x="106.0" y="597.5">1</text>
<rect x="106.7" y="590.6" width="8.6" height="8.4" rx="1.4" fill="#4b3d96" stroke="#bab6da" stroke-width="0.8"/>
<text x="111.0" y="597.5">1</text>
<rect x="227.7" y="590.6" width="8.6" height="8.4" rx="1.4" fill="#4b3d96" stroke="#bab6da" stroke-width="0.8"/>
<text x="232.0" y="597.5">1</text>
<rect x="262.1" y="578.3" width="8.6" height="8.4" rx="1.4" fill="#4b3d96" stroke="#bab6da" stroke-width="0.8"/>
<text x="266.4" y="585.2">3</text>
<rect x="279.7" y="590.6" width="8.6" height="8.4" rx="1.4" fill="#4b3d96" stroke="#bab6da" stroke-width="0.8"/>
<text x="284.0" y="597.5">1</text>
<rect x="285.7" y="572.2" width="8.6" height="8.4" rx="1.4" fill="#4b3d96" stroke="#bab6da" stroke-width="0.8"/>
<text x="290.0" y="579.1">4</text>
<rect x="321.1" y="578.3" width="8.6" height="8.4" rx="1.4" fill="#4b3d96" stroke="#bab6da" stroke-width="0.8"/>
<text x="325.4" y="585.2">3</text>
<rect x="322.0" y="590.6" width="8.6" height="8.4" rx="1.4" fill="#4b3d96" stroke="#bab6da" stroke-width="0.8"/>
<text x="326.3" y="597.5">1</text>
<rect x="341.1" y="590.6" width="8.6" height="8.4" rx="1.4" fill="#4b3d96" stroke="#bab6da" stroke-width="0.8"/>
<text x="345.4" y="597.5">1</text>
<rect x="346.1" y="584.4" width="8.6" height="8.4" rx="1.4" fill="#4b3d96" stroke="#bab6da" stroke-width="0.8"/>
<text x="350.4" y="591.3">2</text>
<rect x="352.4" y="590.6" width="8.6" height="8.4" rx="1.4" fill="#4b3d96" stroke="#bab6da" stroke-width="0.8"/>
<text x="356.7" y="597.5">1</text>
<rect x="361.8" y="590.6" width="8.6" height="8.4" rx="1.4" fill="#4b3d96" stroke="#bab6da" stroke-width="0.8"/>
<text x="366.1" y="597.5">1</text>
<rect x="366.8" y="572.2" width="8.6" height="8.4" rx="1.4" fill="#4b3d96" stroke="#bab6da" stroke-width="0.8"/>
<text x="371.1" y="579.1">4</text>
<rect x="373.1" y="590.6" width="8.6" height="8.4" rx="1.4" fill="#4b3d96" stroke="#bab6da" stroke-width="0.8"/>
<text x="377.4" y="597.5">1</text>
<rect x="379.3" y="590.6" width="8.6" height="8.4" rx="1.4" fill="#4b3d96" stroke="#bab6da" stroke-width="0.8"/>
<text x="383.6" y="597.5">1</text>
<rect x="384.6" y="566.1" width="8.6" height="8.4" rx="1.4" fill="#4b3d96" stroke="#bab6da" stroke-width="0.8"/>
<text x="388.9" y="573.0">5</text>
<rect x="389.4" y="584.4" width="8.6" height="8.4" rx="1.4" fill="#4b3d96" stroke="#bab6da" stroke-width="0.8"/>
<text x="393.7" y="591.3">2</text>
<rect x="403.2" y="590.6" width="8.6" height="8.4" rx="1.4" fill="#4b3d96" stroke="#bab6da" stroke-width="0.8"/>
<text x="407.5" y="597.5">1</text>
<rect x="407.6" y="584.4" width="8.6" height="8.4" rx="1.4" fill="#4b3d96" stroke="#bab6da" stroke-width="0.8"/>
<text x="411.9" y="591.3">2</text>
<rect x="414.1" y="578.3" width="8.6" height="8.4" rx="1.4" fill="#4b3d96" stroke="#bab6da" stroke-width="0.8"/>
<text x="418.4" y="585.2">3</text>
<rect x="414.5" y="590.6" width="8.6" height="8.4" rx="1.4" fill="#4b3d96" stroke="#bab6da" stroke-width="0.8"/>
<text x="418.8" y="597.5">1</text>
<rect x="422.0" y="590.6" width="8.6" height="8.4" rx="1.4" fill="#4b3d96" stroke="#bab6da" stroke-width="0.8"/>
<text x="426.3" y="597.5">1</text>
<rect x="427.0" y="590.6" width="8.6" height="8.4" rx="1.4" fill="#4b3d96" stroke="#bab6da" stroke-width="0.8"/>
<text x="431.3" y="597.5">1</text>
<rect x="431.7" y="584.4" width="8.6" height="8.4" rx="1.4" fill="#4b3d96" stroke="#bab6da" stroke-width="0.8"/>
<text x="436.0" y="591.3">2</text>
<rect x="438.3" y="590.6" width="8.6" height="8.4" rx="1.4" fill="#4b3d96" stroke="#bab6da" stroke-width="0.8"/>
<text x="442.6" y="597.5">1</text>
<rect x="443.9" y="584.4" width="8.6" height="8.4" rx="1.4" fill="#4b3d96" stroke="#bab6da" stroke-width="0.8"/>
<text x="448.2" y="591.3">2</text>
<rect x="450.2" y="584.4" width="8.6" height="8.4" rx="1.4" fill="#4b3d96" stroke="#bab6da" stroke-width="0.8"/>
<text x="454.5" y="591.3">2</text>
<rect x="455.8" y="590.6" width="8.6" height="8.4" rx="1.4" fill="#4b3d96" stroke="#bab6da" stroke-width="0.8"/>
<text x="460.1" y="597.5">1</text>
<rect x="462.1" y="590.6" width="8.6" height="8.4" rx="1.4" fill="#4b3d96" stroke="#bab6da" stroke-width="0.8"/>
<text x="466.4" y="597.5">1</text>
<rect x="467.1" y="578.3" width="8.6" height="8.4" rx="1.4" fill="#4b3d96" stroke="#bab6da" stroke-width="0.8"/>
<text x="471.4" y="585.2">3</text>
<rect x="467.7" y="590.6" width="8.6" height="8.4" rx="1.4" fill="#4b3d96" stroke="#bab6da" stroke-width="0.8"/>
<text x="472.0" y="597.5">1</text>
<rect x="483.1" y="572.2" width="8.6" height="8.4" rx="1.4" fill="#4b3d96" stroke="#bab6da" stroke-width="0.8"/>
<text x="487.4" y="579.1">4</text>
<rect x="484.1" y="590.6" width="8.6" height="8.4" rx="1.4" fill="#4b3d96" stroke="#bab6da" stroke-width="0.8"/>
<text x="488.4" y="597.5">1</text>
<rect x="488.4" y="584.4" width="8.6" height="8.4" rx="1.4" fill="#4b3d96" stroke="#bab6da" stroke-width="0.8"/>
<text x="492.7" y="591.3">2</text>
<rect x="489.5" y="584.4" width="8.6" height="8.4" rx="1.4" fill="#4b3d96" stroke="#bab6da" stroke-width="0.8"/>
<text x="493.8" y="591.3">2</text>
<rect x="494.7" y="590.6" width="8.6" height="8.4" rx="1.4" fill="#4b3d96" stroke="#bab6da" stroke-width="0.8"/>
<text x="499.0" y="597.5">1</text>
<rect x="502.0" y="584.4" width="8.6" height="8.4" rx="1.4" fill="#4b3d96" stroke="#bab6da" stroke-width="0.8"/>
<text x="506.3" y="591.3">2</text>
<rect x="508.3" y="584.4" width="8.6" height="8.4" rx="1.4" fill="#4b3d96" stroke="#bab6da" stroke-width="0.8"/>
<text x="512.6" y="591.3">2</text>
<rect x="522.7" y="578.3" width="8.6" height="8.4" rx="1.4" fill="#4b3d96" stroke="#bab6da" stroke-width="0.8"/>
<text x="527.0" y="585.2">3</text>
<rect x="528.3" y="584.4" width="8.6" height="8.4" rx="1.4" fill="#4b3d96" stroke="#bab6da" stroke-width="0.8"/>
<text x="532.6" y="591.3">2</text>
<rect x="534.9" y="590.6" width="8.6" height="8.4" rx="1.4" fill="#4b3d96" stroke="#bab6da" stroke-width="0.8"/>
<text x="539.2" y="597.5">1</text>
<rect x="542.7" y="584.4" width="8.6" height="8.4" rx="1.4" fill="#4b3d96" stroke="#bab6da" stroke-width="0.8"/>
<text x="547.0" y="591.3">2</text>
<rect x="549.0" y="590.6" width="8.6" height="8.4" rx="1.4" fill="#4b3d96" stroke="#bab6da" stroke-width="0.8"/>
<text x="553.3" y="597.5">1</text>
<rect x="554.0" y="584.4" width="8.6" height="8.4" rx="1.4" fill="#4b3d96" stroke="#bab6da" stroke-width="0.8"/>
<text x="558.3" y="591.3">2</text>
<rect x="563.2" y="578.3" width="8.6" height="8.4" rx="1.4" fill="#4b3d96" stroke="#bab6da" stroke-width="0.8"/>
<text x="567.5" y="585.2">3</text>
<rect x="567.2" y="590.6" width="8.6" height="8.4" rx="1.4" fill="#4b3d96" stroke="#bab6da" stroke-width="0.8"/>
<text x="571.5" y="597.5">1</text>
<rect x="572.6" y="572.2" width="8.6" height="8.4" rx="1.4" fill="#4b3d96" stroke="#bab6da" stroke-width="0.8"/>
<text x="576.9" y="579.1">4</text>
<rect x="573.5" y="590.6" width="8.6" height="8.4" rx="1.4" fill="#4b3d96" stroke="#bab6da" stroke-width="0.8"/>
<text x="577.8" y="597.5">1</text>
<rect x="579.1" y="590.6" width="8.6" height="8.4" rx="1.4" fill="#4b3d96" stroke="#bab6da" stroke-width="0.8"/>
<text x="583.4" y="597.5">1</text>
<rect x="584.1" y="584.4" width="8.6" height="8.4" rx="1.4" fill="#4b3d96" stroke="#bab6da" stroke-width="0.8"/>
<text x="588.4" y="591.3">2</text>
<rect x="590.4" y="584.4" width="8.6" height="8.4" rx="1.4" fill="#4b3d96" stroke="#bab6da" stroke-width="0.8"/>
<text x="594.7" y="591.3">2</text>
<rect x="599.8" y="590.6" width="8.6" height="8.4" rx="1.4" fill="#4b3d96" stroke="#bab6da" stroke-width="0.8"/>
<text x="604.1" y="597.5">1</text>
<rect x="606.7" y="590.6" width="8.6" height="8.4" rx="1.4" fill="#4b3d96" stroke="#bab6da" stroke-width="0.8"/>
<text x="611.0" y="597.5">1</text>
<rect x="613.6" y="590.6" width="8.6" height="8.4" rx="1.4" fill="#4b3d96" stroke="#bab6da" stroke-width="0.8"/>
<text x="617.9" y="597.5">1</text>
<rect x="621.1" y="590.6" width="8.6" height="8.4" rx="1.4" fill="#4b3d96" stroke="#bab6da" stroke-width="0.8"/>
<text x="625.4" y="597.5">1</text>
<rect x="626.1" y="584.4" width="8.6" height="8.4" rx="1.4" fill="#4b3d96" stroke="#bab6da" stroke-width="0.8"/>
<text x="630.4" y="591.3">2</text>
<rect x="632.4" y="584.4" width="8.6" height="8.4" rx="1.4" fill="#4b3d96" stroke="#bab6da" stroke-width="0.8"/>
<text x="636.7" y="591.3">2</text>
<rect x="644.1" y="590.6" width="8.6" height="8.4" rx="1.4" fill="#4b3d96" stroke="#bab6da" stroke-width="0.8"/>
<text x="648.4" y="597.5">1</text>
<rect x="644.3" y="590.6" width="8.6" height="8.4" rx="1.4" fill="#4b3d96" stroke="#bab6da" stroke-width="0.8"/>
<text x="648.6" y="597.5">1</text>
<rect x="650.4" y="590.6" width="8.6" height="8.4" rx="1.4" fill="#4b3d96" stroke="#bab6da" stroke-width="0.8"/>
<text x="654.7" y="597.5">1</text>
<rect x="655.4" y="590.6" width="8.6" height="8.4" rx="1.4" fill="#4b3d96" stroke="#bab6da" stroke-width="0.8"/>
<text x="659.7" y="597.5">1</text>
<rect x="660.4" y="590.6" width="8.6" height="8.4" rx="1.4" fill="#4b3d96" stroke="#bab6da" stroke-width="0.8"/>
<text x="664.7" y="597.5">1</text>
<rect x="665.4" y="590.6" width="8.6" height="8.4" rx="1.4" fill="#4b3d96" stroke="#bab6da" stroke-width="0.8"/>
<text x="669.7" y="597.5">1</text>
<rect x="672.3" y="584.4" width="8.6" height="8.4" rx="1.4" fill="#4b3d96" stroke="#bab6da" stroke-width="0.8"/>
<text x="676.6" y="591.3">2</text>
<rect x="686.3" y="590.6" width="8.6" height="8.4" rx="1.4" fill="#4b3d96" stroke="#bab6da" stroke-width="0.8"/>
<text x="690.6" y="597.5">1</text>
<rect x="693.4" y="584.4" width="8.6" height="8.4" rx="1.4" fill="#4b3d96" stroke="#bab6da" stroke-width="0.8"/>
<text x="697.7" y="591.3">2</text>
<rect x="707.4" y="584.4" width="8.6" height="8.4" rx="1.4" fill="#4b3d96" stroke="#bab6da" stroke-width="0.8"/>
<text x="711.7" y="591.3">2</text>
<rect x="713.7" y="590.6" width="8.6" height="8.4" rx="1.4" fill="#4b3d96" stroke="#bab6da" stroke-width="0.8"/>
<text x="718.0" y="597.5">1</text>
<rect x="721.8" y="590.6" width="8.6" height="8.4" rx="1.4" fill="#4b3d96" stroke="#bab6da" stroke-width="0.8"/>
<text x="726.1" y="597.5">1</text>
<rect x="727.5" y="590.6" width="8.6" height="8.4" rx="1.4" fill="#4b3d96" stroke="#bab6da" stroke-width="0.8"/>
<text x="731.8" y="597.5">1</text>
<rect x="733.1" y="590.6" width="8.6" height="8.4" rx="1.4" fill="#4b3d96" stroke="#bab6da" stroke-width="0.8"/>
<text x="737.4" y="597.5">1</text>
<rect x="740.0" y="590.6" width="8.6" height="8.4" rx="1.4" fill="#4b3d96" stroke="#bab6da" stroke-width="0.8"/>
<text x="744.3" y="597.5">1</text>
<rect x="750.0" y="590.6" width="8.6" height="8.4" rx="1.4" fill="#4b3d96" stroke="#bab6da" stroke-width="0.8"/>
<text x="754.3" y="597.5">1</text>
<rect x="758.2" y="584.4" width="8.6" height="8.4" rx="1.4" fill="#4b3d96" stroke="#bab6da" stroke-width="0.8"/>
<text x="762.5" y="591.3">2</text>
<rect x="767.9" y="590.6" width="8.6" height="8.4" rx="1.4" fill="#4b3d96" stroke="#bab6da" stroke-width="0.8"/>
<text x="772.2" y="597.5">1</text>
<rect x="774.2" y="572.2" width="8.6" height="8.4" rx="1.4" fill="#4b3d96" stroke="#bab6da" stroke-width="0.8"/>
<text x="778.5" y="579.1">4</text>
<rect x="775.1" y="584.4" width="8.6" height="8.4" rx="1.4" fill="#4b3d96" stroke="#bab6da" stroke-width="0.8"/>
<text x="779.4" y="591.3">2</text>
<rect x="789.5" y="584.4" width="8.6" height="8.4" rx="1.4" fill="#4b3d96" stroke="#bab6da" stroke-width="0.8"/>
<text x="793.8" y="591.3">2</text>
<rect x="796.5" y="590.6" width="8.6" height="8.4" rx="1.4" fill="#4b3d96" stroke="#bab6da" stroke-width="0.8"/>
<text x="800.8" y="597.5">1</text>
<rect x="797.1" y="590.6" width="8.6" height="8.4" rx="1.4" fill="#4b3d96" stroke="#bab6da" stroke-width="0.8"/>
<text x="801.4" y="597.5">1</text>
<rect x="805.2" y="584.4" width="8.6" height="8.4" rx="1.4" fill="#4b3d96" stroke="#bab6da" stroke-width="0.8"/>
<text x="809.5" y="591.3">2</text>
<rect x="811.9" y="590.6" width="8.6" height="8.4" rx="1.4" fill="#4b3d96" stroke="#bab6da" stroke-width="0.8"/>
<text x="816.2" y="597.5">1</text>
<rect x="823.8" y="590.6" width="8.6" height="8.4" rx="1.4" fill="#4b3d96" stroke="#bab6da" stroke-width="0.8"/>
<text x="828.1" y="597.5">1</text>
<rect x="829.4" y="584.4" width="8.6" height="8.4" rx="1.4" fill="#4b3d96" stroke="#bab6da" stroke-width="0.8"/>
<text x="833.7" y="591.3">2</text>
<rect x="840.7" y="590.6" width="8.6" height="8.4" rx="1.4" fill="#4b3d96" stroke="#bab6da" stroke-width="0.8"/>
<text x="845.0" y="597.5">1</text>
<rect x="846.1" y="584.4" width="8.6" height="8.4" rx="1.4" fill="#4b3d96" stroke="#bab6da" stroke-width="0.8"/>
<text x="850.4" y="591.3">2</text>
<rect x="852.0" y="590.6" width="8.6" height="8.4" rx="1.4" fill="#4b3d96" stroke="#bab6da" stroke-width="0.8"/>
<text x="856.3" y="597.5">1</text>
<rect x="857.0" y="584.4" width="8.6" height="8.4" rx="1.4" fill="#4b3d96" stroke="#bab6da" stroke-width="0.8"/>
<text x="861.3" y="591.3">2</text>
<rect x="864.5" y="590.6" width="8.6" height="8.4" rx="1.4" fill="#4b3d96" stroke="#bab6da" stroke-width="0.8"/>
<text x="868.8" y="597.5">1</text>
<rect x="869.6" y="590.6" width="8.6" height="8.4" rx="1.4" fill="#4b3d96" stroke="#bab6da" stroke-width="0.8"/>
<text x="873.9" y="597.5">1</text>
<rect x="874.6" y="590.6" width="8.6" height="8.4" rx="1.4" fill="#4b3d96" stroke="#bab6da" stroke-width="0.8"/>
<text x="878.9" y="597.5">1</text>
<rect x="879.6" y="590.6" width="8.6" height="8.4" rx="1.4" fill="#4b3d96" stroke="#bab6da" stroke-width="0.8"/>
<text x="883.9" y="597.5">1</text>
<rect x="887.1" y="590.6" width="8.6" height="8.4" rx="1.4" fill="#4b3d96" stroke="#bab6da" stroke-width="0.8"/>
<text x="891.4" y="597.5">1</text>
<rect x="893.4" y="590.6" width="8.6" height="8.4" rx="1.4" fill="#4b3d96" stroke="#bab6da" stroke-width="0.8"/>
<text x="897.7" y="597.5">1</text>
<rect x="899.0" y="590.6" width="8.6" height="8.4" rx="1.4" fill="#4b3d96" stroke="#bab6da" stroke-width="0.8"/>
<text x="903.3" y="597.5">1</text>
<rect x="904.7" y="590.6" width="8.6" height="8.4" rx="1.4" fill="#4b3d96" stroke="#bab6da" stroke-width="0.8"/>
<text x="909.0" y="597.5">1</text>
<rect x="910.3" y="590.6" width="8.6" height="8.4" rx="1.4" fill="#4b3d96" stroke="#bab6da" stroke-width="0.8"/>
<text x="914.6" y="597.5">1</text>
<rect x="917.2" y="590.6" width="8.6" height="8.4" rx="1.4" fill="#4b3d96" stroke="#bab6da" stroke-width="0.8"/>
<text x="921.5" y="597.5">1</text>
<rect x="930.6" y="584.4" width="8.6" height="8.4" rx="1.4" fill="#4b3d96" stroke="#bab6da" stroke-width="0.8"/>
<text x="934.9" y="591.3">2</text>
<rect x="941.7" y="590.6" width="8.6" height="8.4" rx="1.4" fill="#4b3d96" stroke="#bab6da" stroke-width="0.8"/>
<text x="946.0" y="597.5">1</text>
<rect x="951.9" y="584.4" width="8.6" height="8.4" rx="1.4" fill="#4b3d96" stroke="#bab6da" stroke-width="0.8"/>
<text x="956.2" y="591.3">2</text>
<rect x="952.1" y="584.4" width="8.6" height="8.4" rx="1.4" fill="#4b3d96" stroke="#bab6da" stroke-width="0.8"/>
<text x="956.4" y="591.3">2</text>
<rect x="958.4" y="578.3" width="8.6" height="8.4" rx="1.4" fill="#4b3d96" stroke="#bab6da" stroke-width="0.8"/>
<text x="962.7" y="585.2">3</text>
<rect x="963.4" y="590.6" width="8.6" height="8.4" rx="1.4" fill="#4b3d96" stroke="#bab6da" stroke-width="0.8"/>
<text x="967.7" y="597.5">1</text>
<rect x="968.4" y="566.1" width="8.6" height="8.4" rx="1.4" fill="#4b3d96" stroke="#bab6da" stroke-width="0.8"/>
<text x="972.7" y="573.0">5</text>
<rect x="973.4" y="578.3" width="8.6" height="8.4" rx="1.4" fill="#4b3d96" stroke="#bab6da" stroke-width="0.8"/>
<text x="977.7" y="585.2">3</text>
<rect x="979.7" y="572.2" width="8.6" height="8.4" rx="1.4" fill="#4b3d96" stroke="#bab6da" stroke-width="0.8"/>
<text x="984.0" y="579.1">4</text>
<rect x="985.3" y="584.4" width="8.6" height="8.4" rx="1.4" fill="#4b3d96" stroke="#bab6da" stroke-width="0.8"/>
<text x="989.6" y="591.3">2</text>
<rect x="991.6" y="590.6" width="8.6" height="8.4" rx="1.4" fill="#4b3d96" stroke="#bab6da" stroke-width="0.8"/>
<text x="995.9" y="597.5">1</text>
<rect x="996.4" y="559.9" width="8.6" height="8.4" rx="1.4" fill="#4b3d96" stroke="#bab6da" stroke-width="0.8"/>
<text x="1000.7" y="566.8">6</text>
<rect x="997.2" y="572.2" width="8.6" height="8.4" rx="1.4" fill="#4b3d96" stroke="#bab6da" stroke-width="0.8"/>
<text x="1001.5" y="579.1">4</text>
<rect x="1000.4" y="590.6" width="8.6" height="8.4" rx="1.4" fill="#4b3d96" stroke="#bab6da" stroke-width="0.8"/>
<text x="1004.7" y="597.5">1</text>
<rect x="1005.4" y="547.7" width="8.6" height="8.4" rx="1.4" fill="#4b3d96" stroke="#bab6da" stroke-width="0.8"/>
<text x="1009.7" y="554.6">8</text>
<rect x="1010.4" y="559.9" width="8.6" height="8.4" rx="1.4" fill="#4b3d96" stroke="#bab6da" stroke-width="0.8"/>
<text x="1014.7" y="566.8">6</text>
<rect x="1011.0" y="572.2" width="8.6" height="8.4" rx="1.4" fill="#4b3d96" stroke="#bab6da" stroke-width="0.8"/>
<text x="1015.3" y="579.1">4</text>
<rect x="1013.2" y="590.6" width="8.6" height="8.4" rx="1.4" fill="#4b3d96" stroke="#bab6da" stroke-width="0.8"/>
<text x="1017.5" y="597.5">1</text>
<rect x="1018.2" y="559.9" width="8.6" height="8.4" rx="1.4" fill="#4b3d96" stroke="#bab6da" stroke-width="0.8"/>
<text x="1022.5" y="566.8">6</text>
<rect x="1019.2" y="572.2" width="8.6" height="8.4" rx="1.4" fill="#4b3d96" stroke="#bab6da" stroke-width="0.8"/>
<text x="1023.5" y="579.1">4</text>
<rect x="1025.2" y="559.9" width="8.6" height="8.4" rx="1.4" fill="#4b3d96" stroke="#bab6da" stroke-width="0.8"/>
<text x="1029.5" y="566.8">6</text>
<rect x="1029.5" y="474.1" width="11.8" height="8.4" rx="1.4" fill="#4b3d96" stroke="#bab6da" stroke-width="0.8"/>
<text x="1035.4" y="481.0">20</text>
<rect x="1031.4" y="498.6" width="11.8" height="8.4" rx="1.4" fill="#4b3d96" stroke="#bab6da" stroke-width="0.8"/>
<text x="1037.3" y="505.5">16</text>
<rect x="1033.9" y="523.1" width="11.8" height="8.4" rx="1.4" fill="#4b3d96" stroke="#bab6da" stroke-width="0.8"/>
<text x="1039.8" y="530.0">12</text>
<rect x="1036.7" y="547.7" width="8.6" height="8.4" rx="1.4" fill="#4b3d96" stroke="#bab6da" stroke-width="0.8"/>
<text x="1041.0" y="554.6">8</text>
<rect x="1037.7" y="584.4" width="8.6" height="8.4" rx="1.4" fill="#4b3d96" stroke="#bab6da" stroke-width="0.8"/>
<text x="1042.0" y="591.3">2</text>
<rect x="1042.4" y="535.4" width="11.8" height="8.4" rx="1.4" fill="#4b3d96" stroke="#bab6da" stroke-width="0.8"/>
<text x="1048.3" y="542.3">10</text>
<rect x="1046.1" y="547.7" width="8.6" height="8.4" rx="1.4" fill="#4b3d96" stroke="#bab6da" stroke-width="0.8"/>
<text x="1050.4" y="554.6">8</text>
<rect x="1050.8" y="510.9" width="11.8" height="8.4" rx="1.4" fill="#4b3d96" stroke="#bab6da" stroke-width="0.8"/>
<text x="1056.7" y="517.8">14</text>
<rect x="1052.8" y="547.7" width="8.6" height="8.4" rx="1.4" fill="#4b3d96" stroke="#bab6da" stroke-width="0.8"/>
<text x="1057.1" y="554.6">8</text>
<rect x="1056.2" y="566.1" width="8.6" height="8.4" rx="1.4" fill="#4b3d96" stroke="#bab6da" stroke-width="0.8"/>
<text x="1060.5" y="573.0">5</text>
<rect x="1057.0" y="584.4" width="8.6" height="8.4" rx="1.4" fill="#4b3d96" stroke="#bab6da" stroke-width="0.8"/>
<text x="1061.3" y="591.3">2</text>
<rect x="1063.7" y="584.4" width="8.6" height="8.4" rx="1.4" fill="#4b3d96" stroke="#bab6da" stroke-width="0.8"/>
<text x="1068.0" y="591.3">2</text>
<rect x="1069.3" y="590.6" width="8.6" height="8.4" rx="1.4" fill="#4b3d96" stroke="#bab6da" stroke-width="0.8"/>
<text x="1073.6" y="597.5">1</text>
<rect x="1075.0" y="572.2" width="8.6" height="8.4" rx="1.4" fill="#4b3d96" stroke="#bab6da" stroke-width="0.8"/>
<text x="1079.3" y="579.1">4</text>
<rect x="1075.3" y="584.4" width="8.6" height="8.4" rx="1.4" fill="#4b3d96" stroke="#bab6da" stroke-width="0.8"/>
<text x="1079.6" y="591.3">2</text>
<rect x="1081.2" y="590.6" width="8.6" height="8.4" rx="1.4" fill="#4b3d96" stroke="#bab6da" stroke-width="0.8"/>
<text x="1085.5" y="597.5">1</text>
<rect x="1086.3" y="584.4" width="8.6" height="8.4" rx="1.4" fill="#4b3d96" stroke="#bab6da" stroke-width="0.8"/>
<text x="1090.6" y="591.3">2</text>
<rect x="1092.9" y="578.3" width="8.6" height="8.4" rx="1.4" fill="#4b3d96" stroke="#bab6da" stroke-width="0.8"/>
<text x="1097.2" y="585.2">3</text>
<rect x="1097.5" y="590.6" width="8.6" height="8.4" rx="1.4" fill="#4b3d96" stroke="#bab6da" stroke-width="0.8"/>
<text x="1101.8" y="597.5">1</text>
<rect x="1103.0" y="584.4" width="8.6" height="8.4" rx="1.4" fill="#4b3d96" stroke="#bab6da" stroke-width="0.8"/>
<text x="1107.3" y="591.3">2</text>
<rect x="1103.2" y="584.4" width="8.6" height="8.4" rx="1.4" fill="#4b3d96" stroke="#bab6da" stroke-width="0.8"/>
<text x="1107.5" y="591.3">2</text>
<rect x="1109.2" y="584.4" width="8.6" height="8.4" rx="1.4" fill="#4b3d96" stroke="#bab6da" stroke-width="0.8"/>
<text x="1113.5" y="591.3">2</text>
<rect x="1115.5" y="572.2" width="8.6" height="8.4" rx="1.4" fill="#4b3d96" stroke="#bab6da" stroke-width="0.8"/>
<text x="1119.8" y="579.1">4</text>
<rect x="1116.7" y="584.4" width="8.6" height="8.4" rx="1.4" fill="#4b3d96" stroke="#bab6da" stroke-width="0.8"/>
<text x="1121.0" y="591.3">2</text>
<rect x="1123.0" y="590.6" width="8.6" height="8.4" rx="1.4" fill="#4b3d96" stroke="#bab6da" stroke-width="0.8"/>
<text x="1127.3" y="597.5">1</text>
<rect x="1128.0" y="547.7" width="8.6" height="8.4" rx="1.4" fill="#4b3d96" stroke="#bab6da" stroke-width="0.8"/>
<text x="1132.3" y="554.6">8</text>
<rect x="1129.9" y="584.4" width="8.6" height="8.4" rx="1.4" fill="#4b3d96" stroke="#bab6da" stroke-width="0.8"/>
<text x="1134.2" y="591.3">2</text>
<rect x="1129.9" y="566.1" width="8.6" height="8.4" rx="1.4" fill="#4b3d96" stroke="#bab6da" stroke-width="0.8"/>
<text x="1134.2" y="573.0">5</text>
<rect x="1136.8" y="584.4" width="8.6" height="8.4" rx="1.4" fill="#4b3d96" stroke="#bab6da" stroke-width="0.8"/>
<text x="1141.1" y="591.3">2</text>
<rect x="1136.8" y="566.1" width="8.6" height="8.4" rx="1.4" fill="#4b3d96" stroke="#bab6da" stroke-width="0.8"/>
<text x="1141.1" y="573.0">5</text>
<rect x="1143.1" y="590.6" width="8.6" height="8.4" rx="1.4" fill="#4b3d96" stroke="#bab6da" stroke-width="0.8"/>
<text x="1147.4" y="597.5">1</text>
<rect x="1148.3" y="590.6" width="8.6" height="8.4" rx="1.4" fill="#4b3d96" stroke="#bab6da" stroke-width="0.8"/>
<text x="1152.6" y="597.5">1</text>
<rect x="1153.4" y="566.1" width="8.6" height="8.4" rx="1.4" fill="#4b3d96" stroke="#bab6da" stroke-width="0.8"/>
<text x="1157.7" y="573.0">5</text>
<rect x="1154.1" y="584.4" width="8.6" height="8.4" rx="1.4" fill="#4b3d96" stroke="#bab6da" stroke-width="0.8"/>
<text x="1158.4" y="591.3">2</text>
<rect x="1160.7" y="590.6" width="8.6" height="8.4" rx="1.4" fill="#4b3d96" stroke="#bab6da" stroke-width="0.8"/>
<text x="1165.0" y="597.5">1</text>
<rect x="1165.7" y="590.6" width="8.6" height="8.4" rx="1.4" fill="#4b3d96" stroke="#bab6da" stroke-width="0.8"/>
<text x="1170.0" y="597.5">1</text>
<rect x="1170.0" y="584.4" width="8.6" height="8.4" rx="1.4" fill="#4b3d96" stroke="#bab6da" stroke-width="0.8"/>
<text x="1174.3" y="591.3">2</text>
<rect x="1176.6" y="578.3" width="8.6" height="8.4" rx="1.4" fill="#4b3d96" stroke="#bab6da" stroke-width="0.8"/>
<text x="1180.9" y="585.2">3</text>
<rect x="1182.6" y="584.4" width="8.6" height="8.4" rx="1.4" fill="#4b3d96" stroke="#bab6da" stroke-width="0.8"/>
<text x="1186.9" y="591.3">2</text>
<rect x="1188.8" y="578.3" width="8.6" height="8.4" rx="1.4" fill="#4b3d96" stroke="#bab6da" stroke-width="0.8"/>
<text x="1193.1" y="585.2">3</text>
<rect x="1192.2" y="590.6" width="8.6" height="8.4" rx="1.4" fill="#4b3d96" stroke="#bab6da" stroke-width="0.8"/>
<text x="1196.5" y="597.5">1</text>
<rect x="1197.6" y="553.8" width="8.6" height="8.4" rx="1.4" fill="#4b3d96" stroke="#bab6da" stroke-width="0.8"/>
<text x="1201.9" y="560.7">7</text>
<rect x="1198.3" y="578.3" width="8.6" height="8.4" rx="1.4" fill="#4b3d96" stroke="#bab6da" stroke-width="0.8"/>
<text x="1202.6" y="585.2">3</text>
<rect x="1202.7" y="590.6" width="8.6" height="8.4" rx="1.4" fill="#4b3d96" stroke="#bab6da" stroke-width="0.8"/>
<text x="1207.0" y="597.5">1</text>
<rect x="1207.7" y="566.1" width="8.6" height="8.4" rx="1.4" fill="#4b3d96" stroke="#bab6da" stroke-width="0.8"/>
<text x="1212.0" y="573.0">5</text>
<rect x="1208.0" y="578.3" width="8.6" height="8.4" rx="1.4" fill="#4b3d96" stroke="#bab6da" stroke-width="0.8"/>
<text x="1212.3" y="585.2">3</text>
<rect x="1213.9" y="578.3" width="8.6" height="8.4" rx="1.4" fill="#4b3d96" stroke="#bab6da" stroke-width="0.8"/>
<text x="1218.2" y="585.2">3</text>
<rect x="1220.2" y="578.3" width="8.6" height="8.4" rx="1.4" fill="#4b3d96" stroke="#bab6da" stroke-width="0.8"/>
<text x="1224.5" y="585.2">3</text>
<rect x="1222.1" y="590.6" width="8.6" height="8.4" rx="1.4" fill="#4b3d96" stroke="#bab6da" stroke-width="0.8"/>
<text x="1226.4" y="597.5">1</text>
<rect x="1226.5" y="578.3" width="8.6" height="8.4" rx="1.4" fill="#4b3d96" stroke="#bab6da" stroke-width="0.8"/>
<text x="1230.8" y="585.2">3</text>
<rect x="1232.7" y="578.3" width="8.6" height="8.4" rx="1.4" fill="#4b3d96" stroke="#bab6da" stroke-width="0.8"/>
<text x="1237.0" y="585.2">3</text>
<rect x="1235.2" y="590.6" width="8.6" height="8.4" rx="1.4" fill="#4b3d96" stroke="#bab6da" stroke-width="0.8"/>
<text x="1239.5" y="597.5">1</text>
<rect x="1240.9" y="590.6" width="8.6" height="8.4" rx="1.4" fill="#4b3d96" stroke="#bab6da" stroke-width="0.8"/>
<text x="1245.2" y="597.5">1</text>
<rect x="1246.5" y="590.6" width="8.6" height="8.4" rx="1.4" fill="#4b3d96" stroke="#bab6da" stroke-width="0.8"/>
<text x="1250.8" y="597.5">1</text>
<rect x="1250.7" y="566.1" width="8.6" height="8.4" rx="1.4" fill="#4b3d96" stroke="#bab6da" stroke-width="0.8"/>
<text x="1255.0" y="573.0">5</text>
<rect x="1252.8" y="584.4" width="8.6" height="8.4" rx="1.4" fill="#4b3d96" stroke="#bab6da" stroke-width="0.8"/>
<text x="1257.1" y="591.3">2</text>
<rect x="1259.1" y="584.4" width="8.6" height="8.4" rx="1.4" fill="#4b3d96" stroke="#bab6da" stroke-width="0.8"/>
<text x="1263.4" y="591.3">2</text>
</g>
</svg>
<svg style="position:absolute;left:0;top:0" width="40" height="614" viewBox="0 0 40 614"><g font-family="Liberation Sans, sans-serif" font-size="7.2" text-anchor="end" fill="#efeff4" stroke="#efeff4" stroke-width="0.25"><text transform="translate(25.5 610.40) scale(0.92 1)">0</text><text transform="translate(25.5 567.40) scale(0.92 1)">7</text><text transform="translate(25.5 524.40) scale(0.92 1)">14</text><text transform="translate(25.5 481.40) scale(0.92 1)">21</text><text transform="translate(25.5 438.40) scale(0.92 1)">28</text><text transform="translate(25.5 395.40) scale(0.92 1)">35</text></g></svg>
<span class="t" style="left:1075.00px;top:576.05px;font-size:14.5px;color:rgba(215,215,220,0.30);transform:scaleX(1.0836);">Activate Windows</span>
<span class="t" style="left:1075.00px;top:594.05px;font-size:10.5px;color:rgba(215,215,220,0.30);transform:scaleX(1.0619);">Go to Settings to activate Windows.</span>
<svg style="position:absolute;left:0;top:0" width="1280" height="614" viewBox="0 0 1280 614"><g transform="translate(1209.3 371.9)" stroke="#d4d4dc" fill="none"><circle r="3.8" stroke-width="1.15"/><path d="M-1.9 0H1.9M0 -1.9V1.9" stroke-width="1.2"/></g><g transform="translate(1220.9 371.9)" stroke="#d4d4dc" fill="none"><circle r="3.8" stroke-width="1.15"/><path d="M-1.9 0H1.9" stroke-width="1.2"/></g><g transform="translate(1232.6 370.9)" stroke="#008ffb" fill="none"><circle r="2.9" stroke-width="1.2"/><path d="M2.1 2.1L5.2 5.2" stroke-width="1.4"/><path d="M-1.2 0H1.2M0 -1.2V1.2" stroke-width="0.7"/></g><defs><linearGradient id="hdg" x1="0" y1="0" x2="0" y2="1"><stop offset="0" stop-color="#7f8fa6"/><stop offset="0.45" stop-color="#b9c2ce"/><stop offset="0.7" stop-color="#ffffff"/></linearGradient></defs><g transform="translate(1246.2 371.5)" fill="url(#hdg)"><path d="M-2.4 -1.2 v-1.9 a0.75 0.75 0 0 1 1.5 0 v-0.7 a0.75 0.75 0 0 1 1.5 0 v0.4 a0.75 0.75 0 0 1 1.5 0 v0.7 a0.7 0.7 0 0 1 1.4 0 V2.2 c0 1.6 -1 2.3 -2.6 2.3 h-1.2 c-1.1 0 -1.7 -0.5 -2.3 -1.4 l-1.7 -2.5 c-0.4 -0.6 0.4 -1.2 1 -0.7 z"/></g><g transform="translate(1259.6 371.9)" fill="#f4f4f8"><path d="M0 -4.4 L4.6 -0.3 H3.4 V4.1 H0.9 V1.2 H-0.9 V4.1 H-3.4 V-0.3 H-4.6 Z"/></g></svg>
</div></body></html>
